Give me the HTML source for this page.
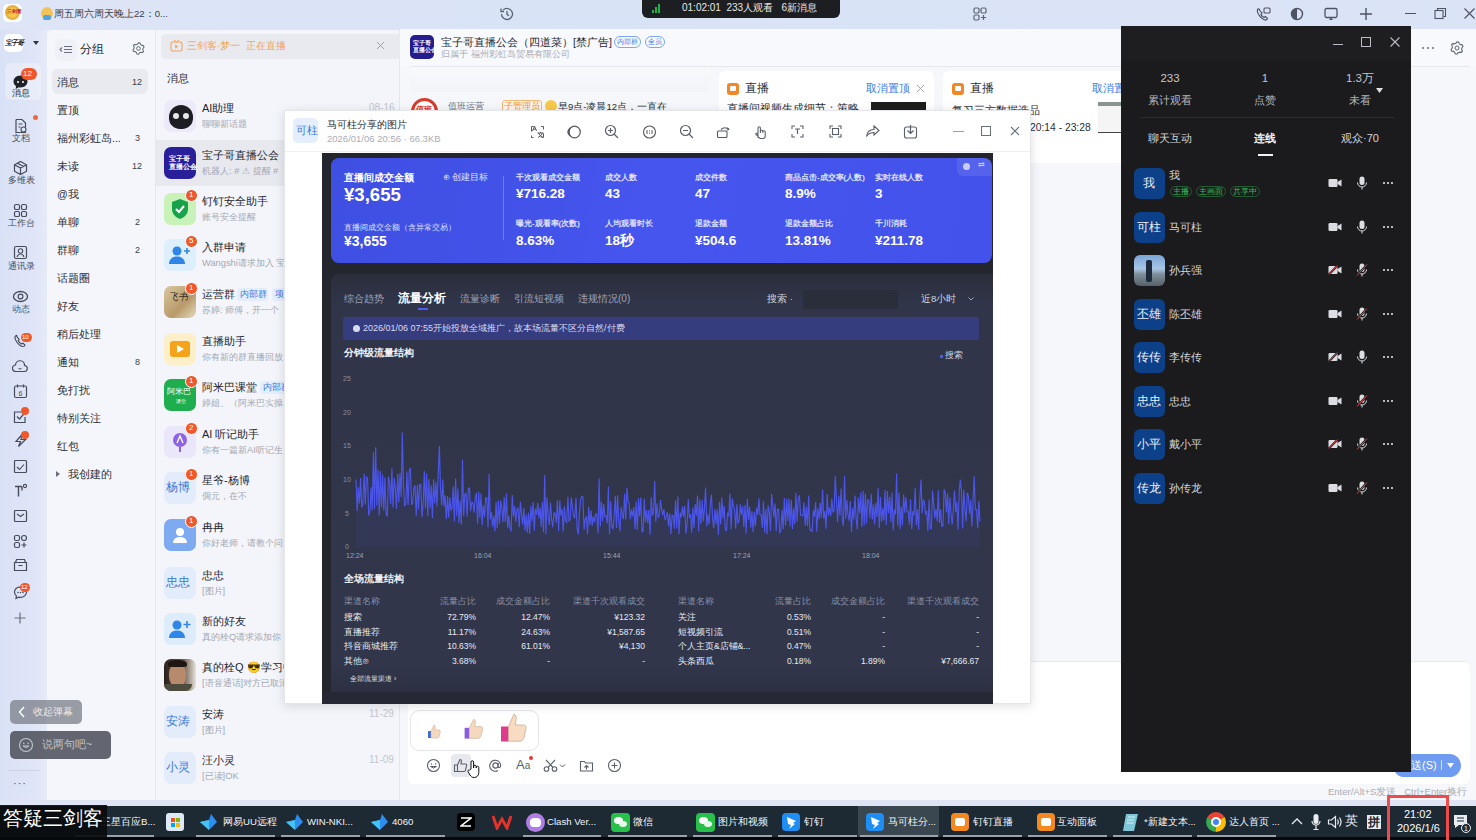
<!DOCTYPE html>
<html><head><meta charset="utf-8">
<style>
*{margin:0;padding:0;box-sizing:border-box}
html,body{width:1476px;height:840px;overflow:hidden;font-family:"Liberation Sans",sans-serif;background:#eef1f8;position:relative}
.a{position:absolute}
.t{position:absolute;white-space:nowrap;line-height:1}
</style></head><body>
<!-- title bar -->
<div class="a" style="left:0;top:0;width:1476px;height:30px;background:linear-gradient(90deg,#dde5f6 0%,#d9e3f6 40%,#dbe4f7 100%)"></div>
<div class="a" style="left:3px;top:4px;width:19px;height:18px;background:#fff;border-radius:5px"></div>
<div class="a" style="left:5px;top:5px;width:15px;height:15px;border-radius:50%;background:radial-gradient(circle,#f4c64a 0 40%,#e9a93a 60%,#f0d78a 100%)"></div>
<div class="t" style="left:7px;top:9px;font-size:5px;color:#c0262b;font-weight:bold">三剑客</div>
<div class="a" style="left:41px;top:7px;width:12px;height:13px;border-radius:50%;background:#f3c35b"></div>
<div class="a" style="left:43px;top:15px;width:8px;height:5px;background:#4ea3e0;border-radius:2px"></div>
<div class="t" style="left:54px;top:9px;font-size:9.6px;color:#383d4a">周五周六周天晚上22：0...</div>
<svg class="a" style="left:499px;top:6px" width="16" height="16" viewBox="0 0 16 16"><path d="M2.5 8a5.5 5.5 0 1 0 1.6-3.9" fill="none" stroke="#5c6270" stroke-width="1.3"/><path d="M2 2.5v3h3" fill="none" stroke="#5c6270" stroke-width="1.3"/><path d="M8 5v3.3l2 1.5" fill="none" stroke="#5c6270" stroke-width="1.3"/></svg>
<!-- live pill -->
<div class="a" style="left:642px;top:-6px;width:198px;height:24px;background:#1d1e22;border-radius:6px"></div>
<div class="a" style="left:652px;top:10px;width:2px;height:3px;background:#23b04b"></div>
<div class="a" style="left:655px;top:7px;width:2px;height:6px;background:#23b04b"></div>
<div class="a" style="left:658px;top:4px;width:2px;height:9px;background:#23b04b"></div>
<div class="t" style="left:682px;top:3px;font-size:10px;color:#e8e8e8">01:02:01&nbsp;&nbsp;233人观看&nbsp;&nbsp;&nbsp;6新消息</div>
<svg class="a" style="left:972px;top:6px" width="16" height="16" viewBox="0 0 16 16"><rect x="2" y="2" width="5" height="5" rx="1.2" fill="none" stroke="#5c6270" stroke-width="1.2"/><rect x="9" y="2" width="5" height="5" rx="1.2" fill="none" stroke="#5c6270" stroke-width="1.2"/><rect x="2" y="9" width="5" height="5" rx="1.2" fill="none" stroke="#5c6270" stroke-width="1.2"/><path d="M11.5 9v5M9 11.5h5" stroke="#5c6270" stroke-width="1.2"/></svg>
<!-- right title icons -->
<svg class="a" style="left:1255px;top:6px" width="17" height="16" viewBox="0 0 17 16"><path d="M3 3c-1 1-1 3 1 6s4 4.5 6 5c1 .2 2-.5 2.5-1.5l-2-2-1.5 1c-1-.5-2.5-2-3-3l1-1.5-2-2.2C4.3 3 3.6 2.6 3 3z" fill="none" stroke="#4d5362" stroke-width="1.2"/><rect x="9" y="2" width="6" height="5" rx="1" fill="none" stroke="#4d5362" stroke-width="1.1"/></svg>
<svg class="a" style="left:1289px;top:6px" width="16" height="16" viewBox="0 0 16 16"><circle cx="8" cy="8" r="5.5" fill="none" stroke="#4d5362" stroke-width="1.4"/><path d="M8 2.5a5.5 5.5 0 0 0 0 11z" fill="#4d5362"/></svg>
<svg class="a" style="left:1323px;top:6px" width="16" height="16" viewBox="0 0 16 16"><rect x="2" y="2.5" width="12" height="9" rx="1.5" fill="none" stroke="#4d5362" stroke-width="1.3"/><path d="M6 14h4l-2-2.5z" fill="#4d5362"/></svg>
<svg class="a" style="left:1358px;top:6px" width="16" height="16" viewBox="0 0 16 16"><path d="M8 2v12M2 8h12" stroke="#4d5362" stroke-width="1.4"/></svg>
<div class="a" style="left:1405px;top:13px;width:11px;height:1px;background:#4d5362"></div>
<svg class="a" style="left:1434px;top:7px" width="13" height="13" viewBox="0 0 13 13"><rect x="1" y="3.5" width="8" height="8" fill="none" stroke="#4d5362" stroke-width="1.1"/><path d="M3.5 3.5V1.5h8v8h-2" fill="none" stroke="#4d5362" stroke-width="1.1"/></svg>
<svg class="a" style="left:1463px;top:7px" width="13" height="13" viewBox="0 0 13 13"><path d="M1.5 1.5l10 10M11.5 1.5l-10 10" stroke="#4d5362" stroke-width="1.2"/></svg>

<!-- left rail -->
<div class="a" style="left:0;top:30px;width:47px;height:770px;background:linear-gradient(90deg,#d9e1f6 0%,#dfe5f7 70%,#e6eaf8 100%)"></div>
<div class="a" style="left:4px;top:34px;width:19px;height:18px;background:#fff;border-radius:5px"></div>
<div class="t" style="left:5px;top:39px;font-size:7px;color:#222;font-weight:bold;font-style:italic;letter-spacing:-1px">宝子哥</div>
<svg class="a" style="left:33px;top:41px" width="6" height="4" viewBox="0 0 6 4"><path d="M0 0h6L3 4z" fill="#333"/></svg>
<div class="a" style="left:5px;top:63px;width:36px;height:37px;background:rgba(255,255,255,.3);border-radius:6px"></div>
<svg class="a" style="left:12px;top:74px" width="17" height="17" viewBox="0 0 17 17"><path d="M8.5 1.5C4.4 1.5 1.5 4.3 1.5 7.6c0 1.9 1 3.6 2.6 4.7L3.6 15l3.2-1.8c.6.1 1.1.2 1.7.2 4.1 0 7-2.8 7-6s-2.9-6-7-6z" fill="#1f2229"/><circle cx="6" cy="8" r="1" fill="#fff"/><circle cx="11" cy="8" r="1" fill="#fff"/></svg>
<div class="a" style="left:21px;top:68px;width:16px;height:12px;background:#f0582a;border-radius:6px"></div>
<div class="t" style="left:23px;top:70px;font-size:8px;color:#fff">12</div>
<div class="t" style="left:12px;top:89px;font-size:9px;color:#2a2e38">消息</div>
<!-- 文档 -->
<svg class="a" style="left:13px;top:118px" width="15" height="16" viewBox="0 0 15 16"><path d="M3 1.5h6l3.5 3.5v4M12.5 13.5v1H3V1.5" fill="none" stroke="#474c5a" stroke-width="1.2"/><path d="M5.5 6h4M5.5 9h2" stroke="#474c5a" stroke-width="1.1"/><circle cx="10.5" cy="11.5" r="2.5" fill="none" stroke="#474c5a" stroke-width="1.1"/></svg>
<div class="a" style="left:33px;top:115px;width:5px;height:5px;border-radius:50%;background:#ee6a3b"></div>
<div class="t" style="left:12px;top:134px;font-size:9px;color:#4a4f5c">文档</div>
<!-- 多维表 -->
<svg class="a" style="left:12px;top:160px" width="17" height="16" viewBox="0 0 17 16"><path d="M8.5 1.5l6 3.3v6.4l-6 3.3-6-3.3V4.8z M2.5 4.8l6 3.3 6-3.3 M8.5 8.1v6.6 M5.5 3.2l6 3.3" fill="none" stroke="#474c5a" stroke-width="1.2"/></svg>
<div class="t" style="left:8px;top:176px;font-size:9px;color:#4a4f5c">多维表</div>
<!-- 工作台 -->
<svg class="a" style="left:13px;top:203px" width="15" height="15" viewBox="0 0 15 15"><rect x="1.5" y="1.5" width="5" height="5" rx="1.6" fill="none" stroke="#474c5a" stroke-width="1.2"/><rect x="8.5" y="1.5" width="5" height="5" rx="1.6" fill="none" stroke="#474c5a" stroke-width="1.2"/><rect x="1.5" y="8.5" width="5" height="5" rx="1.6" fill="none" stroke="#474c5a" stroke-width="1.2"/><rect x="8.5" y="8.5" width="5" height="5" rx="1.6" fill="none" stroke="#474c5a" stroke-width="1.2"/></svg>
<div class="t" style="left:8px;top:219px;font-size:9px;color:#4a4f5c">工作台</div>
<!-- 通讯录 -->
<svg class="a" style="left:13px;top:245px" width="15" height="15" viewBox="0 0 15 15"><rect x="1.5" y="1.5" width="12" height="12" rx="1.5" fill="none" stroke="#474c5a" stroke-width="1.2"/><circle cx="7.5" cy="6" r="2.2" fill="none" stroke="#474c5a" stroke-width="1.1"/><path d="M4 12c.5-2 2-3 3.5-3s3 1 3.5 3" fill="none" stroke="#474c5a" stroke-width="1.1"/></svg>
<div class="t" style="left:8px;top:262px;font-size:9px;color:#4a4f5c">通讯录</div>
<!-- 动态 -->
<svg class="a" style="left:12px;top:290px" width="17" height="13" viewBox="0 0 17 13"><ellipse cx="8.5" cy="6.5" rx="7" ry="5" fill="none" stroke="#474c5a" stroke-width="1.3"/><circle cx="8.5" cy="6.5" r="2.4" fill="none" stroke="#474c5a" stroke-width="1.2"/></svg>
<div class="t" style="left:12px;top:305px;font-size:9px;color:#4a4f5c">动态</div>
<!-- small icons -->
<svg class="a" style="left:13px;top:333px" width="15" height="15" viewBox="0 0 15 15"><path d="M3 2.5c-1.5 1-1.5 3 .5 6s4.5 5 6.5 5c1 0 1.8-.6 2-1.3l-2-2-1.5.8c-1-.6-2.6-2.2-3.2-3.2l.8-1.5-2-2.2C3.8 2.3 3.4 2.2 3 2.5z" fill="none" stroke="#474c5a" stroke-width="1.2"/></svg>
<div class="a" style="left:21px;top:333px;width:11px;height:9px;background:#f0582a;border-radius:5px"></div>
<div class="t" style="left:22px;top:334px;font-size:6px;color:#fff">10</div>
<svg class="a" style="left:12px;top:359px" width="16" height="14" viewBox="0 0 16 14"><path d="M4 12.5h8a3 3 0 0 0 .5-6A4.5 4.5 0 0 0 3.5 6 3.2 3.2 0 0 0 4 12.5z" fill="none" stroke="#474c5a" stroke-width="1.2"/><path d="M6.5 9.5q1.5 1 3 0" fill="none" stroke="#474c5a" stroke-width="1"/></svg>
<svg class="a" style="left:13px;top:383px" width="15" height="16" viewBox="0 0 15 16"><rect x="1.5" y="3" width="12" height="11.5" rx="1.5" fill="none" stroke="#474c5a" stroke-width="1.2"/><path d="M4.5 1.5v3M10.5 1.5v3" stroke="#474c5a" stroke-width="1.2"/><text x="7.5" y="12.5" font-size="7" text-anchor="middle" fill="#474c5a" font-family="Liberation Sans">6</text></svg>
<svg class="a" style="left:13px;top:409px" width="15" height="15" viewBox="0 0 15 15"><path d="M12 8v5.5H1.5V3H8" fill="none" stroke="#474c5a" stroke-width="1.2"/><path d="M4 7.5l2.5 2.5 6-7" fill="none" stroke="#474c5a" stroke-width="1.2"/></svg>
<div class="a" style="left:21px;top:407px;width:8px;height:8px;background:#f0582a;border-radius:50%"></div>
<svg class="a" style="left:13px;top:433px" width="15" height="15" viewBox="0 0 15 15"><path d="M9 1.5L3 8.5h4.5L5.5 13.5l7-7H8z" fill="none" stroke="#474c5a" stroke-width="1.2"/></svg>
<div class="a" style="left:21px;top:431px;width:8px;height:8px;background:#f0582a;border-radius:50%"></div>
<svg class="a" style="left:13px;top:459px" width="15" height="15" viewBox="0 0 15 15"><rect x="1.5" y="1.5" width="12" height="12" rx="1" fill="none" stroke="#474c5a" stroke-width="1.2"/><path d="M4 8l2.5 2.5 4.5-5" fill="none" stroke="#474c5a" stroke-width="1.1"/></svg>
<svg class="a" style="left:13px;top:483px" width="15" height="15" viewBox="0 0 15 15"><path d="M2 3.5h7M5.5 3.5v10M9 3.5v4" fill="none" stroke="#474c5a" stroke-width="1.4"/><circle cx="12" cy="3" r="1.6" fill="none" stroke="#474c5a" stroke-width="1.1"/></svg>
<svg class="a" style="left:13px;top:509px" width="15" height="14" viewBox="0 0 15 14"><rect x="1.5" y="1.5" width="12" height="11" rx="1" fill="none" stroke="#474c5a" stroke-width="1.2"/><path d="M4 5l3.5 2.5L11 5" fill="none" stroke="#474c5a" stroke-width="1.1"/></svg>
<svg class="a" style="left:13px;top:534px" width="15" height="15" viewBox="0 0 15 15"><rect x="1.5" y="1.5" width="5" height="5" rx="1.5" fill="none" stroke="#474c5a" stroke-width="1.2"/><circle cx="11" cy="4" r="2.5" fill="none" stroke="#474c5a" stroke-width="1.2"/><rect x="1.5" y="8.5" width="5" height="5" rx="1.5" fill="none" stroke="#474c5a" stroke-width="1.2"/><path d="M11 8.5v5M8.5 11h5" stroke="#474c5a" stroke-width="1.2"/></svg>
<svg class="a" style="left:13px;top:558px" width="15" height="14" viewBox="0 0 15 14"><path d="M1.5 4.5h12v8h-12z M2.5 4.5l1-3h8l1 3 M5.5 7.5h4" fill="none" stroke="#474c5a" stroke-width="1.2"/></svg>
<svg class="a" style="left:13px;top:585px" width="15" height="15" viewBox="0 0 15 15"><path d="M7.5 1.8c-3.3 0-6 2.3-6 5.3 0 1.5.7 2.9 1.9 3.9l-.4 2.5 2.6-1.4c.6.2 1.2.3 1.9.3 3.3 0 6-2.3 6-5.3S10.8 1.8 7.5 1.8z" fill="none" stroke="#474c5a" stroke-width="1.2"/><circle cx="5" cy="7.5" r=".8" fill="#474c5a"/><circle cx="7.5" cy="7.5" r=".8" fill="#474c5a"/><circle cx="10" cy="7.5" r=".8" fill="#474c5a"/></svg>
<div class="a" style="left:20px;top:583px;width:10px;height:9px;background:#f0582a;border-radius:5px"></div>
<div class="t" style="left:21px;top:584px;font-size:6px;color:#fff">12</div>
<svg class="a" style="left:13px;top:611px" width="14" height="14" viewBox="0 0 14 14"><path d="M7 1.5v11M1.5 7h11" stroke="#6a6f7c" stroke-width="1.2"/></svg>
<div class="a" style="left:8px;top:770px;width:32px;height:1px;background:#cfd4e4"></div>
<div class="t" style="left:13px;top:778px;font-size:11px;color:#474c5a;letter-spacing:1px">···</div>

<!-- group panel -->
<div class="a" style="left:47px;top:30px;width:108px;height:770px;background:#f5f6fb;border-radius:7px 0 0 0"></div>
<div class="a" style="left:55px;top:39px;width:22px;height:22px;border-radius:6px;background:#eff1f7"></div>
<svg class="a" style="left:59px;top:43px" width="14" height="13" viewBox="0 0 14 13"><path d="M5 3.5h8M5 6.5h8M5 9.5h8" stroke="#6b7080" stroke-width="1.1"/><path d="M3 4.5L1 6.5l2 2" fill="none" stroke="#6b7080" stroke-width="1.1"/></svg>
<div class="t" style="left:80px;top:44px;font-size:11.5px;color:#262a33">分组</div>
<svg class="a" style="left:132px;top:42px" width="13" height="13" viewBox="0 0 14 14"><path d="M7.00 0.80 L8.60 1.01 L9.40 2.84 L10.39 3.61 L12.37 3.90 L12.99 5.40 L11.80 7.00 L11.64 8.24 L12.37 10.10 L11.38 11.38 L9.40 11.16 L8.24 11.64 L7.00 13.20 L5.40 12.99 L4.60 11.16 L3.61 10.39 L1.63 10.10 L1.01 8.60 L2.20 7.00 L2.36 5.76 L1.63 3.90 L2.62 2.62 L4.60 2.84 L5.76 2.36z" fill="none" stroke="#5f6472" stroke-width="1.1" stroke-linejoin="round"/><circle cx="7" cy="7" r="2" fill="none" stroke="#5f6472" stroke-width="1"/></svg>
<div class="a" style="left:52px;top:69px;width:96px;height:25px;border-radius:6px;background:#e8eaf0"></div>
<div style="position:absolute;left:57px;top:1px;font-size:10.5px;color:#2a2e37">
<div class="t" style="left:0;top:76px">消息</div>
<div class="t" style="left:0;top:104px">置顶</div>
<div class="t" style="left:0;top:132px">福州彩虹岛...</div>
<div class="t" style="left:0;top:160px">未读</div>
<div class="t" style="left:0;top:188px">@我</div>
<div class="t" style="left:0;top:216px">单聊</div>
<div class="t" style="left:0;top:244px">群聊</div>
<div class="t" style="left:0;top:272px">话题圈</div>
<div class="t" style="left:0;top:300px">好友</div>
<div class="t" style="left:0;top:328px">稍后处理</div>
<div class="t" style="left:0;top:356px">通知</div>
<div class="t" style="left:0;top:384px">免打扰</div>
<div class="t" style="left:0;top:412px">特别关注</div>
<div class="t" style="left:0;top:440px">红包</div>
<div class="t" style="left:11px;top:468px">我创建的</div>
</div>
<svg class="a" style="left:56px;top:471px" width="5" height="6" viewBox="0 0 5 6"><path d="M0 0l4 3-4 3z" fill="#6b7080"/></svg>
<div style="position:absolute;left:1px;top:1px;font-size:9px;color:#3a3e48">
<div class="t" style="left:131px;top:77px">12</div>
<div class="t" style="left:134px;top:133px">3</div>
<div class="t" style="left:131px;top:161px">12</div>
<div class="t" style="left:134px;top:217px">2</div>
<div class="t" style="left:134px;top:245px">2</div>
<div class="t" style="left:134px;top:357px">8</div>
</div>

<!-- message list -->
<div class="a" style="left:155px;top:30px;width:245px;height:770px;background:#f4f5fa;border-left:1px solid #e4e6ee;border-right:1px solid #e4e6ee"></div>
<div class="a" style="left:161px;top:34px;width:239px;height:25px;background:#e9eaef;border-radius:5px 0 0 5px"></div>
<svg class="a" style="left:170px;top:39px" width="13" height="13" viewBox="0 0 13 13"><rect x="1" y="3" width="11" height="9" rx="1.5" fill="none" stroke="#f0a35a" stroke-width="1.1"/><path d="M4 1l2.5 2L9 1" fill="none" stroke="#f0a35a" stroke-width="1"/><path d="M5.2 5.5v4l3-2z" fill="#f0a35a"/></svg>
<div class="t" style="left:187px;top:41px;font-size:9.6px;color:#f0a35a">三剑客·梦一&nbsp; 正在直播</div>
<svg class="a" style="left:376px;top:41px" width="9" height="9" viewBox="0 0 9 9"><path d="M1 1l7 7M8 1L1 8" stroke="#9ca1ad" stroke-width="1"/></svg>
<div class="t" style="left:167px;top:73px;font-size:11px;color:#2a2e37">消息</div>
<!-- selected row bg -->
<div class="a" style="left:156px;top:140px;width:243px;height:46px;background:#e7e9ef"></div>
<div class="a" style="left:164px;top:100px;width:32px;height:32px;border-radius:7px;background:#eceaf8"></div>
<div class="a" style="left:169px;top:105px;width:24px;height:24px;border-radius:50% 50% 45% 45%;background:#1d1d24"></div>
<div class="a" style="left:173px;top:113px;width:6px;height:6px;border-radius:50%;background:#e8e8e8"></div><div class="a" style="left:183px;top:113px;width:6px;height:6px;border-radius:50%;background:#e8e8e8"></div>
<div class="t" style="left:202px;top:103px;font-size:11px;color:#23262e">AI助理</div>
<div class="t" style="left:202px;top:120px;font-size:9.3px;color:#a3a8b3">聊聊新话题</div>
<div class="t" style="left:369px;top:103px;font-size:10px;color:#c2c6ce">08-16</div>
<div class="a" style="left:164px;top:147px;width:32px;height:32px;border-radius:7px;background:#2a1f9a"></div>
<div class="t" style="left:169px;top:155px;font-size:7px;color:#fff;font-weight:bold;line-height:8px">宝子哥<br>直播公会</div>
<div class="t" style="left:202px;top:150px;font-size:11px;color:#23262e">宝子哥直播公会</div>
<div class="t" style="left:202px;top:167px;font-size:9.3px;color:#a3a8b3">机器人: # ⚠ 提醒 #</div>
<div class="a" style="left:164px;top:193px;width:32px;height:32px;border-radius:7px;background:#c9f2b8"></div>
<svg class="a" style="left:170px;top:198px" width="20" height="22" viewBox="0 0 20 22"><path d="M10 1l8 3v7c0 5-3.5 8.5-8 10-4.5-1.5-8-5-8-10V4z" fill="#18a34a"/><path d="M6 11l3 3 5-6" fill="none" stroke="#fff" stroke-width="2"/></svg>
<div class="a" style="left:185px;top:189px;width:13px;height:13px;border-radius:50%;background:#f0582a;border:1px solid #fff"></div>
<div class="t" style="left:189px;top:191px;font-size:8px;color:#fff">1</div>
<div class="t" style="left:202px;top:196px;font-size:11px;color:#23262e">钉钉安全助手</div>
<div class="t" style="left:202px;top:213px;font-size:9.3px;color:#a3a8b3">账号安全提醒</div>
<div class="a" style="left:164px;top:239px;width:32px;height:32px;border-radius:7px;background:#ddeefc"></div>
<svg class="a" style="left:168px;top:245px" width="24" height="20" viewBox="0 0 24 20"><circle cx="9" cy="6" r="4.5" fill="#2f86e8"/><path d="M1 19c0-5 3.5-7.5 8-7.5s8 2.5 8 7.5z" fill="#2f86e8"/><path d="M19 3v6M16 6h6" stroke="#2f86e8" stroke-width="1.6"/></svg>
<div class="a" style="left:185px;top:235px;width:13px;height:13px;border-radius:50%;background:#f0582a;border:1px solid #fff"></div>
<div class="t" style="left:189px;top:237px;font-size:8px;color:#fff">5</div>
<div class="t" style="left:202px;top:242px;font-size:11px;color:#23262e">入群申请</div>
<div class="t" style="left:202px;top:259px;font-size:9.3px;color:#a3a8b3">Wangshi请求加入 宝</div>
<div class="a" style="left:164px;top:286px;width:32px;height:32px;border-radius:7px;background:linear-gradient(135deg,#d9c7a0,#b89a6a 60%,#e8dcc0)"></div>
<div class="t" style="left:168px;top:292px;font-size:10px;color:#3a2a1a;font-style:italic">飞书</div>
<div class="a" style="left:185px;top:282px;width:13px;height:13px;border-radius:50%;background:#f0582a;border:1px solid #fff"></div>
<div class="t" style="left:189px;top:284px;font-size:8px;color:#fff">1</div>
<div class="t" style="left:202px;top:289px;font-size:11px;color:#23262e">运营群</div>
<div class="t" style="left:202px;top:306px;font-size:9.3px;color:#a3a8b3">苏婷: 师傅，开一个</div>
<div class="a" style="left:164px;top:333px;width:32px;height:32px;border-radius:7px;background:#fdf0c8"></div>
<div class="a" style="left:170px;top:341px;width:20px;height:16px;border-radius:3px;background:#f5a31a"></div>
<svg class="a" style="left:177px;top:345px" width="7" height="8" viewBox="0 0 7 8"><path d="M0 0l7 4-7 4z" fill="#fff"/></svg>
<div class="t" style="left:202px;top:336px;font-size:11px;color:#23262e">直播助手</div>
<div class="t" style="left:202px;top:353px;font-size:9.3px;color:#a3a8b3">你有新的群直播回放</div>
<div class="a" style="left:164px;top:379px;width:32px;height:32px;border-radius:7px;background:#1fae4e"></div>
<div class="t" style="left:167px;top:388px;font-size:8px;color:#fff">阿米巴</div><div class="t" style="left:176px;top:399px;font-size:5px;color:#fff">课堂</div>
<div class="a" style="left:185px;top:375px;width:13px;height:13px;border-radius:50%;background:#f0582a;border:1px solid #fff"></div>
<div class="t" style="left:189px;top:377px;font-size:8px;color:#fff">1</div>
<div class="t" style="left:202px;top:382px;font-size:11px;color:#23262e">阿米巴课堂</div>
<div class="t" style="left:202px;top:399px;font-size:9.3px;color:#a3a8b3">婷姐、（阿米巴实操</div>
<div class="a" style="left:164px;top:426px;width:32px;height:32px;border-radius:7px;background:#ebe7fa"></div>
<svg class="a" style="left:170px;top:431px" width="20" height="22" viewBox="0 0 20 22"><circle cx="10" cy="9" r="7" fill="#8d63e6"/><path d="M10 16v5" stroke="#8d63e6" stroke-width="2"/><path d="M7 12l3-7 3 7" fill="none" stroke="#fff" stroke-width="1.4"/></svg>
<div class="a" style="left:185px;top:422px;width:13px;height:13px;border-radius:50%;background:#f0582a;border:1px solid #fff"></div>
<div class="t" style="left:189px;top:424px;font-size:8px;color:#fff">2</div>
<div class="t" style="left:202px;top:429px;font-size:11px;color:#23262e">AI 听记助手</div>
<div class="t" style="left:202px;top:446px;font-size:9.3px;color:#a3a8b3">你有一篇新AI听记生</div>
<div class="a" style="left:164px;top:472px;width:32px;height:32px;border-radius:7px;background:#e3ecfb"></div>
<div class="t" style="left:166px;top:482px;font-size:11.5px;color:#3a78d8">杨博</div>
<div class="a" style="left:185px;top:468px;width:13px;height:13px;border-radius:50%;background:#f0582a;border:1px solid #fff"></div>
<div class="t" style="left:189px;top:470px;font-size:8px;color:#fff">1</div>
<div class="t" style="left:202px;top:475px;font-size:11px;color:#23262e">星爷-杨博</div>
<div class="t" style="left:202px;top:492px;font-size:9.3px;color:#a3a8b3">倜元，在不</div>
<div class="a" style="left:164px;top:519px;width:32px;height:32px;border-radius:7px;background:#7eaaf2"></div>
<svg class="a" style="left:170px;top:525px" width="20" height="20" viewBox="0 0 20 20"><circle cx="10" cy="7" r="4" fill="#fff"/><path d="M3 18c0-4 3-6 7-6s7 2 7 6z" fill="#fff"/></svg>
<div class="a" style="left:185px;top:515px;width:13px;height:13px;border-radius:50%;background:#f0582a;border:1px solid #fff"></div>
<div class="t" style="left:189px;top:517px;font-size:8px;color:#fff">1</div>
<div class="t" style="left:202px;top:522px;font-size:11px;color:#23262e">冉冉</div>
<div class="t" style="left:202px;top:539px;font-size:9.3px;color:#a3a8b3">你好老师，请教个问</div>
<div class="a" style="left:164px;top:567px;width:32px;height:32px;border-radius:7px;background:#e3ecfb"></div>
<div class="t" style="left:166px;top:577px;font-size:11.5px;color:#3a78d8">忠忠</div>
<div class="t" style="left:202px;top:570px;font-size:11px;color:#23262e">忠忠</div>
<div class="t" style="left:202px;top:587px;font-size:9.3px;color:#a3a8b3">[图片]</div>
<div class="a" style="left:164px;top:613px;width:32px;height:32px;border-radius:7px;background:#dcecfb"></div>
<svg class="a" style="left:168px;top:619px" width="24" height="20" viewBox="0 0 24 20"><circle cx="9" cy="6" r="4.5" fill="#2f86e8"/><path d="M1 19c0-5 3.5-7.5 8-7.5s8 2.5 8 7.5z" fill="#2f86e8"/><path d="M19 2v7M15.5 5.5h7" stroke="#2f86e8" stroke-width="1.6"/></svg>
<div class="t" style="left:202px;top:616px;font-size:11px;color:#23262e">新的好友</div>
<div class="t" style="left:202px;top:633px;font-size:9.3px;color:#a3a8b3">真的栓Q请求添加你</div>
<div class="a" style="left:164px;top:659px;width:32px;height:32px;border-radius:7px;background:linear-gradient(90deg,#2a201c,#6b5a4a 60%,#e8e2da);overflow:hidden"></div><div class="a" style="left:169px;top:663px;width:17px;height:24px;border-radius:45%;background:#b88a6c"></div><div class="a" style="left:168px;top:660px;width:19px;height:7px;border-radius:50% 50% 20% 20%;background:#1e1612"></div><div class="a" style="left:164px;top:684px;width:28px;height:7px;border-radius:0 0 7px 7px;background:#4d4a3e"></div>
<div class="t" style="left:202px;top:662px;font-size:11px;color:#23262e">真的栓Q 😎学习中</div>
<div class="t" style="left:202px;top:679px;font-size:9.3px;color:#a3a8b3">[语音通话]对方已取消</div>
<div class="a" style="left:164px;top:706px;width:32px;height:32px;border-radius:7px;background:#e3ecfb"></div>
<div class="t" style="left:166px;top:716px;font-size:11.5px;color:#3a78d8">安涛</div>
<div class="t" style="left:202px;top:709px;font-size:11px;color:#23262e">安涛</div>
<div class="t" style="left:202px;top:726px;font-size:9.3px;color:#a3a8b3">[图片]</div>
<div class="t" style="left:369px;top:709px;font-size:10px;color:#c2c6ce">11-29</div>
<div class="a" style="left:164px;top:752px;width:32px;height:32px;border-radius:7px;background:#e3ecfb"></div>
<div class="t" style="left:166px;top:762px;font-size:11.5px;color:#3a78d8">小灵</div>
<div class="t" style="left:202px;top:755px;font-size:11px;color:#23262e">汪小灵</div>
<div class="t" style="left:202px;top:772px;font-size:9.3px;color:#a3a8b3">[已读]OK</div>
<div class="t" style="left:369px;top:755px;font-size:10px;color:#c2c6ce">11-09</div>

<div class="a" style="left:237px;top:288px;width:31px;height:13px;border-radius:3px;background:#e4edfc"></div><div class="t" style="left:240px;top:290px;font-size:8.5px;color:#3a7ae0">内部群</div>
<div class="a" style="left:272px;top:288px;width:20px;height:13px;border-radius:3px;background:#e4edfc"></div><div class="t" style="left:275px;top:290px;font-size:8.5px;color:#3a7ae0">项目</div>
<div class="a" style="left:260px;top:381px;width:31px;height:13px;border-radius:3px;background:#e4edfc"></div><div class="t" style="left:263px;top:383px;font-size:8.5px;color:#3a7ae0">内部群</div>
<!-- chat -->
<div class="a" style="left:400px;top:29px;width:1076px;height:771px;background:#f6f7fa;border-radius:0"></div>
<div class="a" style="left:400px;top:29px;width:1076px;height:37px;background:#f8f9fc"></div>
<div class="a" style="left:410px;top:66px;width:1060px;height:1px;background:#e6e8ee"></div>
<div class="a" style="left:410px;top:35px;width:24px;height:24px;border-radius:5px;background:#251c8e"></div>
<div class="t" style="left:413px;top:40px;font-size:6px;line-height:7px;color:#fff;font-weight:bold">宝子哥<br>直播公会</div>
<div class="t" style="left:441px;top:37px;font-size:10.6px;color:#262a33">宝子哥直播公会（四道菜）[禁广告]</div>
<div class="a" style="left:614px;top:36px;width:27px;height:12px;border:1px solid #7aa7f0;border-radius:6px"></div>
<div class="t" style="left:617px;top:38px;font-size:7.3px;color:#3a7ae0">内部群</div>
<div class="a" style="left:645px;top:36px;width:20px;height:12px;border:1px solid #7aa7f0;border-radius:6px"></div>
<div class="t" style="left:648px;top:38px;font-size:7.3px;color:#3a7ae0">全员</div>
<div class="t" style="left:441px;top:50px;font-size:9.3px;color:#a9adb8">归属于 福州彩虹岛贸易有限公司</div>
<svg class="a" style="left:1421px;top:46px" width="14" height="4" viewBox="0 0 14 4"><circle cx="2" cy="2" r="1" fill="#6a6f7c"/><circle cx="7" cy="2" r="1" fill="#6a6f7c"/><circle cx="12" cy="2" r="1" fill="#6a6f7c"/></svg>
<svg class="a" style="left:1450px;top:41px" width="14" height="14" viewBox="0 0 14 14"><path d="M7.00 0.80 L8.60 1.01 L9.40 2.84 L10.39 3.61 L12.37 3.90 L12.99 5.40 L11.80 7.00 L11.64 8.24 L12.37 10.10 L11.38 11.38 L9.40 11.16 L8.24 11.64 L7.00 13.20 L5.40 12.99 L4.60 11.16 L3.61 10.39 L1.63 10.10 L1.01 8.60 L2.20 7.00 L2.36 5.76 L1.63 3.90 L2.62 2.62 L4.60 2.84 L5.76 2.36z" fill="none" stroke="#5f6472" stroke-width="1.1" stroke-linejoin="round"/><circle cx="7" cy="7" r="2" fill="none" stroke="#5f6472" stroke-width="1"/></svg>
<div class="a" style="left:1410px;top:66px;width:60px;height:1px;background:#e6e8ee"></div>
<!-- pinned strip -->
<div class="a" style="left:410px;top:68px;width:300px;height:24px;background:linear-gradient(180deg,#f8f9fb,#f3f4f8)"></div>
<div class="a" style="left:719px;top:71px;width:215px;height:92px;background:#fff;border-radius:6px"></div>
<div class="a" style="left:943px;top:71px;width:190px;height:92px;background:#fff;border-radius:6px"></div>
<div class="a" style="left:727px;top:83px;width:12px;height:12px;border-radius:3px;background:#f0882a"></div>
<div class="a" style="left:730px;top:86px;width:6px;height:5px;border-radius:1px;background:#fff"></div>
<div class="t" style="left:745px;top:83px;font-size:11.5px;color:#2a2e37">直播</div>
<div class="t" style="left:866px;top:83px;font-size:11px;color:#3a7ae0">取消置顶</div>
<svg class="a" style="left:916px;top:84px" width="9" height="9" viewBox="0 0 9 9"><path d="M1 1l7 7M8 1L1 8" stroke="#9ca1ad" stroke-width="1"/></svg>
<div class="t" style="left:727px;top:103px;font-size:11px;color:#2a2e37">直播间视频生成细节：策略</div>
<div class="a" style="left:871px;top:102px;width:55px;height:10px;background:#1e1e1e"></div>
<div class="a" style="left:952px;top:83px;width:12px;height:12px;border-radius:3px;background:#f0882a"></div>
<div class="a" style="left:955px;top:86px;width:6px;height:5px;border-radius:1px;background:#fff"></div>
<div class="t" style="left:970px;top:83px;font-size:11.5px;color:#2a2e37">直播</div>
<div class="t" style="left:1092px;top:83px;font-size:11px;color:#3a7ae0">取消置顶</div>
<div class="t" style="left:952px;top:105px;font-size:11px;color:#2a2e37">复习三方数据选品</div>
<div class="t" style="left:1030px;top:123px;font-size:10.3px;color:#2a2e37">20:14 - 23:28</div>
<div class="a" style="left:1098px;top:102px;width:23px;height:31px;background:linear-gradient(180deg,#8a948e 0 12%,#f4f5f4 12%);border-bottom:1px solid #444"></div>
<div class="a" style="left:719px;top:93px;width:0;height:0"></div>
<!-- first msg -->
<div class="a" style="left:411px;top:98px;width:27px;height:27px;border-radius:50%;background:#fff;border:3px solid #d93a2b"></div><div class="t" style="left:416px;top:106px;font-size:8px;color:#d93a2b;font-weight:bold">值班</div>
<div class="t" style="left:448px;top:102px;font-size:9.3px;color:#6b707c">值班运营</div>
<div class="a" style="left:502px;top:100px;width:40px;height:13px;border:1px solid #f2b774;border-radius:3px;background:#fff5e8"></div>
<div class="t" style="left:504px;top:102px;font-size:8.8px;color:#f0953a">子管理员</div>
<div class="a" style="left:545px;top:100px;width:12px;height:12px;border-radius:50%;background:#f7c94a"></div>
<div class="t" style="left:558px;top:102px;font-size:9.5px;color:#2a2e37">早9点-凌晨12点，一直在</div>
<!-- right side under viewer items (faint) -->

<!-- input area -->

<div class="a" style="left:408px;top:661px;width:1062px;height:123px;background:#fff;border-radius:6px;border-top:1px solid #e6e8ed"></div>
<div class="a" style="left:410px;top:710px;width:129px;height:41px;background:#fff;border:1px solid #e3e5ea;border-radius:9px"></div>
<svg class="a" style="left:424px;top:721px" width="20" height="20" viewBox="0 0 20 20"><path d="M4 10h3v7H4z" fill="#3b6fd4"/><path d="M7 10l3-6c1 0 1.5 1 1.2 2.5L11 9h4c1 0 1.5.8 1.3 1.7l-1 4.5c-.3 1-1 1.8-2 1.8H7z" fill="#f5d9bf" stroke="#c9a78a" stroke-width=".5"/></svg>
<svg class="a" style="left:461px;top:717px" width="24" height="24" viewBox="0 0 20 20"><path d="M3 9h4v9H3z" fill="#8a5ed8"/><path d="M7 9l3.5-7c1.2 0 1.8 1.2 1.4 3L11.5 8h5c1.2 0 1.8 1 1.5 2l-1.2 5.5c-.3 1.3-1.2 2.3-2.4 2.3H7z" fill="#f5d9bf" stroke="#c9a78a" stroke-width=".5"/></svg>
<svg class="a" style="left:498px;top:713px" width="30" height="30" viewBox="0 0 20 20"><path d="M2 9h5v10H2z" fill="#e03c8e"/><path d="M7 9l3.5-8c1.3 0 2 1.3 1.6 3.3L11.5 8h5.5c1.3 0 2 1 1.7 2.2l-1.3 6c-.4 1.5-1.4 2.6-2.7 2.6H7z" fill="#f7dcc3" stroke="#c9a78a" stroke-width=".5"/></svg>
<!-- toolbar icons -->
<svg class="a" style="left:426px;top:758px" width="15" height="15" viewBox="0 0 15 15"><circle cx="7.5" cy="7.5" r="6" fill="none" stroke="#5a5f6c" stroke-width="1.1"/><path d="M4.5 8.5q3 3 6 0z" fill="none" stroke="#5a5f6c" stroke-width="1"/><circle cx="5.5" cy="6" r=".7" fill="#5a5f6c"/><circle cx="9.5" cy="6" r=".7" fill="#5a5f6c"/></svg>
<div class="a" style="left:451px;top:754px;width:20px;height:23px;border-radius:4px;background:#e8e9ee"></div>
<svg class="a" style="left:453px;top:758px" width="15" height="15" viewBox="0 0 15 15"><path d="M1.5 7h3v6.5h-3z M4.5 7l2.5-5.5c1 0 1.6.8 1.3 2L8 6h4.5c.8 0 1.3.7 1.1 1.4l-1.1 4.8c-.2.8-.8 1.3-1.5 1.3H4.5" fill="none" stroke="#5a5f6c" stroke-width="1.1"/></svg>
<svg class="a" style="left:467px;top:759px" width="14" height="20" viewBox="0 0 14 20"><path d="M4 10V3a1.3 1.3 0 0 1 2.6 0v6V7.5a1.3 1.3 0 0 1 2.6 0V9 8.5a1.3 1.3 0 0 1 2.6 0v5c0 3-2 5-4.5 5H7c-2 0-3-1-4-2.5L1 12.5c-.5-.8.5-1.8 1.3-1.2z" fill="#fff" stroke="#111" stroke-width="1"/></svg>
<svg class="a" style="left:488px;top:758px" width="15" height="15" viewBox="0 0 15 15"><circle cx="7.5" cy="7.5" r="2.6" fill="none" stroke="#5a5f6c" stroke-width="1.1"/><path d="M10.1 5v3.5c0 1.5 2.6 1.5 2.6-1A5.5 5.5 0 1 0 10 12.5" fill="none" stroke="#5a5f6c" stroke-width="1.1"/></svg>
<div class="t" style="left:516px;top:758px;font-size:13px;color:#5a5f6c">A<span style="font-size:10px">a</span></div>
<div class="a" style="left:529px;top:756px;width:4px;height:4px;border-radius:50%;background:#e53935"></div>
<svg class="a" style="left:543px;top:758px" width="24" height="15" viewBox="0 0 24 15"><circle cx="3.5" cy="11" r="2.3" fill="none" stroke="#5a5f6c" stroke-width="1.1"/><circle cx="11.5" cy="11" r="2.3" fill="none" stroke="#5a5f6c" stroke-width="1.1"/><path d="M5 9.5L12 2M10 9.5L3 2" stroke="#5a5f6c" stroke-width="1.1"/><path d="M17 6.5l2.5 2.5 2.5-2.5" fill="none" stroke="#5a5f6c" stroke-width="1"/></svg>
<svg class="a" style="left:579px;top:758px" width="15" height="15" viewBox="0 0 15 15"><path d="M1.5 3.5h4l1 1.5h7v8h-12z" fill="none" stroke="#5a5f6c" stroke-width="1.1"/><path d="M7.5 11.5v-4M5.5 9.5l2-2 2 2" fill="none" stroke="#5a5f6c" stroke-width="1.1"/></svg>
<svg class="a" style="left:607px;top:758px" width="15" height="15" viewBox="0 0 15 15"><circle cx="7.5" cy="7.5" r="6" fill="none" stroke="#5a5f6c" stroke-width="1.1"/><path d="M7.5 4.5v6M4.5 7.5h6" stroke="#5a5f6c" stroke-width="1.1"/></svg>
<div class="a" style="left:1393px;top:754px;width:68px;height:23px;border-radius:12px;background:#6f9cf1"></div>
<div class="t" style="left:1411px;top:760px;font-size:11px;color:#fff">送(S)</div>
<div class="a" style="left:1441px;top:760px;width:1px;height:10px;background:#cfe0ff"></div>
<svg class="a" style="left:1447px;top:763px" width="7" height="5" viewBox="0 0 7 5"><path d="M0 0h7L3.5 5z" fill="#fff"/></svg>
<div class="t" style="left:1328px;top:787px;font-size:9.5px;color:#a9adb6">Enter/Alt+S发送&nbsp;&nbsp;&nbsp;Ctrl+Enter换行</div>
<!-- left overlays -->
<div class="a" style="left:10px;top:700px;width:72px;height:24px;border-radius:5px;background:rgba(120,125,135,.75)"></div>
<svg class="a" style="left:18px;top:706px" width="8" height="12" viewBox="0 0 8 12"><path d="M6 1L1.5 6 6 11" fill="none" stroke="#fff" stroke-width="1.4"/></svg>
<div class="t" style="left:33px;top:707px;font-size:10px;color:#e8eaee">收起弹幕</div>
<div class="a" style="left:10px;top:731px;width:101px;height:28px;border-radius:5px;background:rgba(78,82,92,.88)"></div>
<svg class="a" style="left:18px;top:737px" width="16" height="16" viewBox="0 0 16 16"><circle cx="8" cy="8" r="6.5" fill="none" stroke="#c4c7ce" stroke-width="1.1"/><path d="M5 9q3 3 6 0z" fill="none" stroke="#c4c7ce" stroke-width="1"/><circle cx="5.8" cy="6.3" r=".8" fill="#c4c7ce"/><circle cx="10.2" cy="6.3" r=".8" fill="#c4c7ce"/></svg>
<div class="t" style="left:42px;top:739px;font-size:10.5px;color:#bfc2c9">说两句吧~</div>

<!-- image viewer -->
<div class="a" style="left:284px;top:110px;width:747px;height:594px;background:#fff;box-shadow:0 2px 10px rgba(0,0,0,.13);border:1px solid #e4e6eb"></div>
<div class="a" style="left:293px;top:118px;width:25px;height:25px;border-radius:5px;background:#e5eefc"></div>
<div class="t" style="left:296px;top:125px;font-size:10.5px;color:#3a7ae0">可柱</div>
<div class="t" style="left:327px;top:120px;font-size:10.3px;color:#262a33">马可柱分享的图片</div>
<div class="t" style="left:327px;top:134px;font-size:9.5px;color:#a9adb8">2026/01/06 20:56 · 66.3KB</div>
<div class="a" style="left:285px;top:151px;width:745px;height:1px;background:#eef0f3"></div>
<svg class="a" style="left:530px;top:124px" width="15" height="16" viewBox="0 0 15 16"><path d="M1.5 7.5V2.5h2M11 2.5h2.5v3M13.5 9.5v4h-2M3.5 13.5h-2v-2" fill="none" stroke="#55595f" stroke-width="1"/><path d="M2.5 7l2-5 2 5M3.3 5.2h2.4" fill="none" stroke="#55595f" stroke-width="1"/><path d="M7.5 9h6M10.5 8v1M8.5 9q1 3 4.5 4.5M12.5 9q-1 3-4.5 4.5" fill="none" stroke="#55595f" stroke-width="1"/></svg>
<svg class="a" style="left:567px;top:124px" width="15" height="16" viewBox="0 0 15 16"><circle cx="7.5" cy="8" r="5.8" fill="none" stroke="#55595f" stroke-width="1.2"/><path d="M5 3.3a5.8 5.8 0 0 0 0 9.4 4.2 4.2 0 0 1 0-9.4z" fill="#55595f"/></svg>
<svg class="a" style="left:604px;top:124px" width="15" height="16" viewBox="0 0 15 16"><circle cx="6.5" cy="6.5" r="5" fill="none" stroke="#5a5f6c" stroke-width="1.2"/><path d="M10 10l4 4M4 6.5h5M6.5 4v5" stroke="#5a5f6c" stroke-width="1.2"/></svg>
<svg class="a" style="left:642px;top:124px" width="15" height="16" viewBox="0 0 15 16"><circle cx="7.5" cy="8" r="6" fill="none" stroke="#55595f" stroke-width="1.1"/><path d="M5 6v4M10 6v4" stroke="#55595f" stroke-width="1"/><circle cx="7.5" cy="6.8" r=".6" fill="#55595f"/><circle cx="7.5" cy="9.2" r=".6" fill="#55595f"/></svg>
<svg class="a" style="left:679px;top:124px" width="15" height="16" viewBox="0 0 15 16"><circle cx="6.5" cy="6.5" r="5" fill="none" stroke="#5a5f6c" stroke-width="1.2"/><path d="M10 10l4 4M4 6.5h5" stroke="#5a5f6c" stroke-width="1.2"/></svg>
<svg class="a" style="left:716px;top:124px" width="15" height="16" viewBox="0 0 15 16"><rect x="1.5" y="7" width="9.5" height="6.5" rx="1" fill="none" stroke="#55595f" stroke-width="1.1"/><path d="M5 5.5q3.5-3.5 8 0" fill="none" stroke="#55595f" stroke-width="1.1"/><path d="M11.5 3.5l1.5 2-2.3.6" fill="none" stroke="#55595f" stroke-width="1"/></svg>
<svg class="a" style="left:753px;top:124px" width="15" height="16" viewBox="0 0 15 16"><path d="M5 14V4a1.2 1.2 0 0 1 2.4 0v5-1.5a1.2 1.2 0 0 1 2.4 0V9v-1a1.2 1.2 0 0 1 2.4 0V12c0 1.5-1 2.5-2 2.5H7L3 10.5c-.5-.6 0-1.5.9-1.2L5 10" fill="none" stroke="#5a5f6c" stroke-width="1.1"/></svg>
<svg class="a" style="left:790px;top:124px" width="15" height="16" viewBox="0 0 15 16"><path d="M2 5V2h3M10 2h3v3M13 10v3h-3M5 13H2v-3" fill="none" stroke="#5a5f6c" stroke-width="1.1"/><path d="M5 5h5M7.5 5v5" stroke="#5a5f6c" stroke-width="1.2"/></svg>
<svg class="a" style="left:828px;top:124px" width="15" height="16" viewBox="0 0 15 16"><path d="M2 5V2h3M10 2h3v3M13 10v3h-3M5 13H2v-3" fill="none" stroke="#5a5f6c" stroke-width="1.1"/><rect x="4.5" y="4.5" width="6" height="6" fill="none" stroke="#5a5f6c" stroke-width="1.1"/></svg>
<svg class="a" style="left:865px;top:124px" width="15" height="16" viewBox="0 0 15 16"><path d="M9 2l5 4.5-5 4.5V8.5c-4 0-6 1.5-7.5 4 .5-4 3-7 7.5-7z" fill="none" stroke="#5a5f6c" stroke-width="1.1"/></svg>
<svg class="a" style="left:903px;top:124px" width="15" height="16" viewBox="0 0 15 16"><rect x="1.5" y="3" width="12" height="11" rx="2" fill="none" stroke="#5a5f6c" stroke-width="1.1"/><path d="M7.5 1v8M4.5 6.5l3 3 3-3" fill="none" stroke="#5a5f6c" stroke-width="1.2"/></svg>
<div class="a" style="left:953px;top:131px;width:11px;height:1px;background:#9a9fab"></div>
<div class="a" style="left:981px;top:126px;width:10px;height:10px;border:1px solid #6a6f7c"></div>
<svg class="a" style="left:1010px;top:126px" width="10" height="10" viewBox="0 0 10 10"><path d="M1 1l8 8M9 1L1 9" stroke="#6a6f7c" stroke-width="1.1"/></svg>
<div class="a" style="left:322px;top:153px;width:671px;height:551px;background:#24262e"></div>
<div class="a" style="left:331px;top:274px;width:662px;height:418px;background:linear-gradient(180deg,#2b2e3b 0,#30354a 30px,#31364b 390px,#2c3042 100%);border-radius:8px 0 0 0"></div><div class="a" style="left:322px;top:692px;width:671px;height:12px;background:#262835"></div>
<div class="a" style="left:331px;top:158px;width:661px;height:105px;border-radius:8px;background:linear-gradient(100deg,#3f4fe2 0%,#4555ee 50%,#4252ea 100%)"></div>
<div class="a" style="left:957px;top:158px;width:35px;height:18px;border-radius:0 8px 0 6px;background:rgba(255,255,255,.1)"></div>
<div class="a" style="left:963px;top:163px;width:7px;height:7px;border-radius:50%;background:#c7cdf7"></div>
<div class="t" style="left:978px;top:161px;font-size:8px;color:#c7cdf7">⇄</div>
<div class="t" style="left:344px;top:173px;font-size:10.4px;font-weight:bold;color:#ffffff">直播间成交金额</div>
<div class="t" style="left:344px;top:186px;font-size:18.6px;font-weight:bold;color:#ffffff">¥3,655</div>
<div class="t" style="left:443px;top:173px;font-size:8.5px;color:#dfe3fb">⊕ 创建目标</div>
<div class="t" style="left:344px;top:224px;font-size:7.6px;color:#dfe3fb">直播间成交金额（含异常交易）</div>
<div class="t" style="left:344px;top:234px;font-size:14px;font-weight:bold;color:#ffffff">¥3,655</div>
<div class="a" style="left:503px;top:176px;width:1px;height:64px;background:rgba(255,255,255,.25)"></div>
<div class="t" style="left:516px;top:174px;font-size:7.8px;color:#dfe3fb;font-weight:bold">千次观看成交金额</div>
<div class="t" style="left:516px;top:187px;font-size:13.5px;font-weight:bold;color:#ffffff">¥716.28</div>
<div class="t" style="left:516px;top:220px;font-size:7.8px;color:#dfe3fb;font-weight:bold">曝光-观看率(次数)</div>
<div class="t" style="left:516px;top:234px;font-size:13.5px;font-weight:bold;color:#ffffff">8.63%</div>
<div class="t" style="left:605px;top:174px;font-size:7.8px;color:#dfe3fb;font-weight:bold">成交人数</div>
<div class="t" style="left:605px;top:187px;font-size:13.5px;font-weight:bold;color:#ffffff">43</div>
<div class="t" style="left:605px;top:220px;font-size:7.8px;color:#dfe3fb;font-weight:bold">人均观看时长</div>
<div class="t" style="left:605px;top:234px;font-size:13.5px;font-weight:bold;color:#ffffff">18秒</div>
<div class="t" style="left:695px;top:174px;font-size:7.8px;color:#dfe3fb;font-weight:bold">成交件数</div>
<div class="t" style="left:695px;top:187px;font-size:13.5px;font-weight:bold;color:#ffffff">47</div>
<div class="t" style="left:695px;top:220px;font-size:7.8px;color:#dfe3fb;font-weight:bold">退款金额</div>
<div class="t" style="left:695px;top:234px;font-size:13.5px;font-weight:bold;color:#ffffff">¥504.6</div>
<div class="t" style="left:785px;top:174px;font-size:7.8px;color:#dfe3fb;font-weight:bold">商品点击-成交率(人数)</div>
<div class="t" style="left:785px;top:187px;font-size:13.5px;font-weight:bold;color:#ffffff">8.9%</div>
<div class="t" style="left:785px;top:220px;font-size:7.8px;color:#dfe3fb;font-weight:bold">退款金额占比</div>
<div class="t" style="left:785px;top:234px;font-size:13.5px;font-weight:bold;color:#ffffff">13.81%</div>
<div class="t" style="left:875px;top:174px;font-size:7.8px;color:#dfe3fb;font-weight:bold">实时在线人数</div>
<div class="t" style="left:875px;top:187px;font-size:13.5px;font-weight:bold;color:#ffffff">3</div>
<div class="t" style="left:875px;top:220px;font-size:7.8px;color:#dfe3fb;font-weight:bold">千川消耗</div>
<div class="t" style="left:875px;top:234px;font-size:13.5px;font-weight:bold;color:#ffffff">¥211.78</div>
<div class="t" style="left:344px;top:294px;font-size:10px;color:#9ea3b5">综合趋势</div>
<div class="t" style="left:460px;top:294px;font-size:10px;color:#9ea3b5">流量诊断</div>
<div class="t" style="left:514px;top:294px;font-size:10px;color:#9ea3b5">引流短视频</div>
<div class="t" style="left:578px;top:294px;font-size:10px;color:#9ea3b5">违规情况(0)</div>
<div class="t" style="left:398px;top:292px;font-size:12px;font-weight:bold;color:#fff">流量分析</div>
<div class="a" style="left:418px;top:308px;width:10px;height:2px;background:#4e5cf0"></div>
<div class="t" style="left:767px;top:294px;font-size:9.5px;color:#d0d3de">搜索 ·</div>
<div class="a" style="left:803px;top:290px;width:95px;height:19px;background:#2a2d3a;border-radius:3px"></div>
<div class="t" style="left:921px;top:294px;font-size:9.5px;color:#d0d3de">近8小时</div>
<svg class="a" style="left:968px;top:297px" width="6" height="4" viewBox="0 0 6 4"><path d="M.5.5L3 3 5.5.5" fill="none" stroke="#b0b4c2" stroke-width=".9"/></svg>
<div class="a" style="left:343px;top:317px;width:636px;height:23px;background:#363d7e;border-radius:2px"></div>
<div class="a" style="left:353px;top:325px;width:7px;height:7px;border-radius:50%;background:#d8dcf0"></div>
<div class="t" style="left:363px;top:324px;font-size:9px;color:#d8dcf0">2026/01/06 07:55开始投放全域推广，故本场流量不区分自然/付费</div>
<div class="t" style="left:344px;top:348px;font-size:10px;font-weight:bold;color:#f0f1f5">分钟级流量结构</div>
<div class="a" style="left:940px;top:355px;width:3px;height:3px;background:#4e5cf0"></div>
<div class="t" style="left:945px;top:351px;font-size:8.5px;color:#d0d3de">搜索</div>
<div class="t" style="left:343px;top:375px;font-size:7px;color:#8a8fa0">25</div>
<div class="t" style="left:343px;top:409px;font-size:7px;color:#8a8fa0">20</div>
<div class="t" style="left:343px;top:442px;font-size:7px;color:#8a8fa0">15</div>
<div class="t" style="left:343px;top:476px;font-size:7px;color:#8a8fa0">10</div>
<div class="t" style="left:345px;top:510px;font-size:7px;color:#8a8fa0">5</div>
<div class="t" style="left:345px;top:543px;font-size:7px;color:#8a8fa0">0</div>
<div class="t" style="left:346px;top:552px;font-size:7px;color:#9ea3b5">12:24</div>
<div class="t" style="left:474px;top:552px;font-size:7px;color:#9ea3b5">16:04</div>
<div class="t" style="left:603px;top:552px;font-size:7px;color:#9ea3b5">15:44</div>
<div class="t" style="left:733px;top:552px;font-size:7px;color:#9ea3b5">17:24</div>
<div class="t" style="left:862px;top:552px;font-size:7px;color:#9ea3b5">18:04</div>
<svg class="a" style="left:0;top:0" width="1000" height="600" viewBox="0 0 1000 600"><polygon points="356,547 356.0,479.6 357.2,511.1 358.3,487.1 359.5,503.5 360.6,478.0 361.8,507.7 362.9,503.8 364.1,473.4 365.3,504.4 366.4,476.2 367.6,479.2 368.7,515.5 369.9,510.9 371.1,487.3 372.2,510.2 373.4,452.6 374.5,508.7 375.7,447.3 376.8,505.4 378.0,469.6 379.2,515.5 380.3,470.9 381.5,507.4 382.6,474.6 383.8,510.4 384.9,477.5 386.1,514.4 387.3,516.4 388.4,476.6 389.6,482.7 390.7,504.3 391.9,468.2 393.0,507.3 394.2,478.1 395.4,488.8 396.5,508.6 397.7,473.8 398.8,502.3 400.0,472.9 401.2,497.1 402.3,432.4 403.5,486.6 404.6,506.3 405.8,504.0 406.9,471.5 408.1,504.9 409.3,470.8 410.4,467.8 411.6,505.1 412.7,502.9 413.9,488.3 415.0,485.3 416.2,516.2 417.4,484.8 418.5,509.3 419.7,484.0 420.8,484.7 422.0,517.3 423.1,505.2 424.3,471.0 425.5,508.2 426.6,473.5 427.8,516.2 428.9,479.2 430.1,508.3 431.3,485.2 432.4,518.2 433.6,479.4 434.7,503.5 435.9,482.2 437.0,506.2 438.2,473.4 439.4,445.9 440.5,488.3 441.7,505.5 442.8,479.4 444.0,506.5 445.1,495.2 446.3,519.1 447.5,496.1 448.6,517.7 449.8,497.4 450.9,510.5 452.1,508.1 453.2,486.5 454.4,521.6 455.6,478.6 456.7,515.7 457.9,488.6 459.0,523.1 460.2,500.6 461.4,524.5 462.5,459.4 463.7,516.1 464.8,494.6 466.0,492.8 467.1,516.7 468.3,488.5 469.5,487.8 470.6,511.1 471.8,502.4 472.9,502.3 474.1,512.6 475.2,498.2 476.4,492.7 477.6,523.6 478.7,491.7 479.9,517.9 481.0,493.6 482.2,525.2 483.3,505.2 484.5,517.1 485.7,497.2 486.8,497.9 488.0,527.2 489.1,473.9 490.3,519.3 491.5,512.4 492.6,526.6 493.8,515.8 494.9,531.3 496.1,501.9 497.2,528.3 498.4,500.4 499.6,524.0 500.7,500.6 501.9,508.6 503.0,522.2 504.2,497.0 505.3,521.9 506.5,493.4 507.7,528.1 508.8,515.9 510.0,527.9 511.1,531.4 512.3,495.0 513.4,516.4 514.6,506.0 515.8,521.8 516.9,509.9 518.1,507.7 519.2,527.2 520.4,501.7 521.6,514.2 522.7,524.8 523.9,508.2 525.0,530.6 526.2,514.5 527.3,532.6 528.5,512.7 529.7,533.9 530.8,506.0 532.0,521.0 533.1,502.0 534.3,530.8 535.4,508.6 536.6,514.8 537.8,502.8 538.9,518.4 540.1,507.6 541.2,526.9 542.4,501.7 543.5,532.6 544.7,475.0 545.9,534.3 547.0,497.2 548.2,516.2 549.3,524.9 550.5,502.5 551.7,520.2 552.8,527.2 554.0,512.4 555.1,513.7 556.3,522.4 557.4,500.3 558.6,531.1 559.8,500.4 560.9,515.7 562.1,509.2 563.2,531.5 564.4,506.3 565.5,519.6 566.7,523.1 567.9,496.9 569.0,521.8 570.2,518.5 571.3,497.5 572.5,507.2 573.6,516.5 574.8,518.0 576.0,497.9 577.1,528.4 578.3,534.5 579.4,513.9 580.6,499.5 581.8,496.2 582.9,496.9 584.1,529.7 585.2,519.1 586.4,516.4 587.5,534.3 588.7,506.9 589.9,525.2 591.0,510.3 592.2,525.7 593.3,516.4 594.5,522.4 595.6,513.5 596.8,514.5 598.0,533.6 599.1,478.3 600.3,526.5 601.4,501.8 602.6,521.2 603.7,504.0 604.9,516.6 606.1,515.8 607.2,523.5 608.4,486.6 609.5,534.6 610.7,501.1 611.9,527.3 613.0,529.2 614.2,515.5 615.3,495.8 616.5,528.1 617.6,495.3 618.8,521.4 620.0,531.4 621.1,507.1 622.3,514.7 623.4,519.2 624.6,493.8 625.7,519.5 626.9,487.8 628.1,501.4 629.2,503.3 630.4,519.1 631.5,509.6 632.7,516.5 633.8,507.1 635.0,529.1 636.2,501.7 637.3,529.9 638.5,498.3 639.6,516.5 640.8,497.4 642.0,532.4 643.1,530.8 644.3,498.7 645.4,522.1 646.6,509.7 647.7,523.1 648.9,509.9 650.1,534.8 651.2,497.2 652.4,515.6 653.5,513.0 654.7,480.9 655.8,521.7 657.0,503.4 658.2,518.2 659.3,514.6 660.5,499.8 661.6,509.1 662.8,515.3 663.9,509.0 665.1,520.2 666.3,516.4 667.4,512.1 668.6,526.1 669.7,513.2 670.9,534.2 672.1,515.0 673.2,515.7 674.4,528.8 675.5,500.5 676.7,528.6 677.8,496.6 679.0,534.5 680.2,512.6 681.3,517.3 682.5,506.6 683.6,516.6 684.8,505.7 685.9,533.7 687.1,524.3 688.3,499.2 689.4,518.2 690.6,514.2 691.7,532.7 692.9,507.9 694.0,527.6 695.2,504.0 696.4,515.6 697.5,495.6 698.7,531.4 699.8,499.4 701.0,523.9 702.2,500.2 703.3,521.5 704.5,507.6 705.6,487.6 706.8,526.5 707.9,514.3 709.1,524.4 710.3,504.0 711.4,494.6 712.6,518.5 713.7,528.1 714.9,508.8 716.0,524.0 717.2,509.6 718.4,534.8 719.5,501.9 720.7,524.5 721.8,497.4 723.0,518.4 724.1,505.8 725.3,529.5 726.5,531.0 727.6,512.6 728.8,516.7 729.9,493.5 731.1,529.2 732.3,498.5 733.4,506.6 734.6,509.2 735.7,528.7 736.9,504.2 738.0,523.4 739.2,519.7 740.4,504.3 741.5,514.8 742.7,506.3 743.8,526.9 745.0,505.0 746.1,533.7 747.3,498.7 748.5,519.7 749.6,506.8 750.8,527.6 751.9,511.2 753.1,532.0 754.2,511.8 755.4,526.2 756.6,507.9 757.7,515.0 758.9,498.3 760.0,515.0 761.2,514.9 762.4,527.9 763.5,501.2 764.7,532.6 765.8,509.4 767.0,534.2 768.1,505.3 769.3,512.4 770.5,530.9 771.6,493.7 772.8,505.2 773.9,517.5 775.1,503.5 776.2,531.2 777.4,509.1 778.6,509.1 779.7,533.1 780.9,531.0 782.0,509.5 783.2,529.3 784.3,498.1 785.5,525.5 786.7,498.7 787.8,520.9 789.0,498.5 790.1,526.2 791.3,499.8 792.5,529.0 793.6,508.5 794.8,524.2 795.9,492.7 797.1,521.6 798.2,498.9 799.4,495.3 800.6,515.2 801.7,515.5 802.9,515.9 804.0,502.5 805.2,525.8 806.3,506.5 807.5,526.3 808.7,495.5 809.8,530.3 811.0,529.5 812.1,531.9 813.3,510.4 814.4,516.6 815.6,502.0 816.8,531.7 817.9,508.4 819.1,519.2 820.2,502.9 821.4,517.6 822.6,489.4 823.7,518.7 824.9,511.0 826.0,528.7 827.2,494.1 828.3,515.7 829.5,507.5 830.7,516.1 831.8,498.5 833.0,512.5 834.1,510.5 835.3,476.2 836.4,498.5 837.6,522.1 838.8,495.8 839.9,515.8 841.1,488.5 842.2,519.4 843.4,526.0 844.5,476.0 845.7,518.8 846.9,500.1 848.0,514.6 849.2,520.7 850.3,501.1 851.5,531.9 852.7,508.0 853.8,519.5 855.0,495.5 856.1,517.9 857.3,529.4 858.4,497.4 859.6,513.3 860.8,492.2 861.9,527.1 863.1,490.8 864.2,525.1 865.4,493.5 866.5,523.2 867.7,499.3 868.9,501.4 870.0,518.2 871.2,493.8 872.3,519.5 873.5,504.4 874.6,524.5 875.8,502.9 877.0,517.1 878.1,488.1 879.3,528.2 880.4,496.7 881.6,521.7 882.8,508.3 883.9,520.2 885.1,489.9 886.2,525.1 887.4,491.1 888.5,513.1 889.7,496.8 890.9,522.0 892.0,492.5 893.2,530.4 894.3,509.6 895.5,514.6 896.6,473.5 897.8,525.7 899.0,492.8 900.1,529.0 901.3,506.2 902.4,525.4 903.6,494.5 904.7,512.8 905.9,497.3 907.1,512.1 908.2,511.3 909.4,524.5 910.5,499.2 911.7,529.3 912.9,511.1 914.0,515.4 915.2,487.7 916.3,524.9 917.5,509.3 918.6,529.8 919.8,499.0 921.0,479.6 922.1,513.2 923.3,499.5 924.4,502.4 925.6,514.4 926.7,510.9 927.9,531.1 929.1,499.5 930.2,528.3 931.4,529.1 932.5,490.5 933.7,504.0 934.8,518.1 936.0,509.0 937.2,521.4 938.3,490.3 939.5,523.0 940.6,509.3 941.8,526.8 943.0,525.6 944.1,489.3 945.3,493.0 946.4,512.4 947.6,493.3 948.7,524.1 949.9,497.5 951.1,514.0 952.2,524.5 953.4,508.7 954.5,490.6 955.7,512.1 956.8,501.9 958.0,529.7 959.2,491.6 960.3,479.6 961.5,491.1 962.6,528.6 963.8,489.9 964.9,508.2 966.1,521.4 967.3,492.7 968.4,496.5 969.6,513.8 970.7,500.2 971.9,526.2 973.1,498.9 974.2,476.2 975.4,510.0 976.5,509.1 977.7,528.2 978.8,500.8 980.0,521.5 980,547" fill="rgba(72,82,230,.07)"/><polyline points="356.0,479.6 357.2,511.1 358.3,487.1 359.5,503.5 360.6,478.0 361.8,507.7 362.9,503.8 364.1,473.4 365.3,504.4 366.4,476.2 367.6,479.2 368.7,515.5 369.9,510.9 371.1,487.3 372.2,510.2 373.4,452.6 374.5,508.7 375.7,447.3 376.8,505.4 378.0,469.6 379.2,515.5 380.3,470.9 381.5,507.4 382.6,474.6 383.8,510.4 384.9,477.5 386.1,514.4 387.3,516.4 388.4,476.6 389.6,482.7 390.7,504.3 391.9,468.2 393.0,507.3 394.2,478.1 395.4,488.8 396.5,508.6 397.7,473.8 398.8,502.3 400.0,472.9 401.2,497.1 402.3,432.4 403.5,486.6 404.6,506.3 405.8,504.0 406.9,471.5 408.1,504.9 409.3,470.8 410.4,467.8 411.6,505.1 412.7,502.9 413.9,488.3 415.0,485.3 416.2,516.2 417.4,484.8 418.5,509.3 419.7,484.0 420.8,484.7 422.0,517.3 423.1,505.2 424.3,471.0 425.5,508.2 426.6,473.5 427.8,516.2 428.9,479.2 430.1,508.3 431.3,485.2 432.4,518.2 433.6,479.4 434.7,503.5 435.9,482.2 437.0,506.2 438.2,473.4 439.4,445.9 440.5,488.3 441.7,505.5 442.8,479.4 444.0,506.5 445.1,495.2 446.3,519.1 447.5,496.1 448.6,517.7 449.8,497.4 450.9,510.5 452.1,508.1 453.2,486.5 454.4,521.6 455.6,478.6 456.7,515.7 457.9,488.6 459.0,523.1 460.2,500.6 461.4,524.5 462.5,459.4 463.7,516.1 464.8,494.6 466.0,492.8 467.1,516.7 468.3,488.5 469.5,487.8 470.6,511.1 471.8,502.4 472.9,502.3 474.1,512.6 475.2,498.2 476.4,492.7 477.6,523.6 478.7,491.7 479.9,517.9 481.0,493.6 482.2,525.2 483.3,505.2 484.5,517.1 485.7,497.2 486.8,497.9 488.0,527.2 489.1,473.9 490.3,519.3 491.5,512.4 492.6,526.6 493.8,515.8 494.9,531.3 496.1,501.9 497.2,528.3 498.4,500.4 499.6,524.0 500.7,500.6 501.9,508.6 503.0,522.2 504.2,497.0 505.3,521.9 506.5,493.4 507.7,528.1 508.8,515.9 510.0,527.9 511.1,531.4 512.3,495.0 513.4,516.4 514.6,506.0 515.8,521.8 516.9,509.9 518.1,507.7 519.2,527.2 520.4,501.7 521.6,514.2 522.7,524.8 523.9,508.2 525.0,530.6 526.2,514.5 527.3,532.6 528.5,512.7 529.7,533.9 530.8,506.0 532.0,521.0 533.1,502.0 534.3,530.8 535.4,508.6 536.6,514.8 537.8,502.8 538.9,518.4 540.1,507.6 541.2,526.9 542.4,501.7 543.5,532.6 544.7,475.0 545.9,534.3 547.0,497.2 548.2,516.2 549.3,524.9 550.5,502.5 551.7,520.2 552.8,527.2 554.0,512.4 555.1,513.7 556.3,522.4 557.4,500.3 558.6,531.1 559.8,500.4 560.9,515.7 562.1,509.2 563.2,531.5 564.4,506.3 565.5,519.6 566.7,523.1 567.9,496.9 569.0,521.8 570.2,518.5 571.3,497.5 572.5,507.2 573.6,516.5 574.8,518.0 576.0,497.9 577.1,528.4 578.3,534.5 579.4,513.9 580.6,499.5 581.8,496.2 582.9,496.9 584.1,529.7 585.2,519.1 586.4,516.4 587.5,534.3 588.7,506.9 589.9,525.2 591.0,510.3 592.2,525.7 593.3,516.4 594.5,522.4 595.6,513.5 596.8,514.5 598.0,533.6 599.1,478.3 600.3,526.5 601.4,501.8 602.6,521.2 603.7,504.0 604.9,516.6 606.1,515.8 607.2,523.5 608.4,486.6 609.5,534.6 610.7,501.1 611.9,527.3 613.0,529.2 614.2,515.5 615.3,495.8 616.5,528.1 617.6,495.3 618.8,521.4 620.0,531.4 621.1,507.1 622.3,514.7 623.4,519.2 624.6,493.8 625.7,519.5 626.9,487.8 628.1,501.4 629.2,503.3 630.4,519.1 631.5,509.6 632.7,516.5 633.8,507.1 635.0,529.1 636.2,501.7 637.3,529.9 638.5,498.3 639.6,516.5 640.8,497.4 642.0,532.4 643.1,530.8 644.3,498.7 645.4,522.1 646.6,509.7 647.7,523.1 648.9,509.9 650.1,534.8 651.2,497.2 652.4,515.6 653.5,513.0 654.7,480.9 655.8,521.7 657.0,503.4 658.2,518.2 659.3,514.6 660.5,499.8 661.6,509.1 662.8,515.3 663.9,509.0 665.1,520.2 666.3,516.4 667.4,512.1 668.6,526.1 669.7,513.2 670.9,534.2 672.1,515.0 673.2,515.7 674.4,528.8 675.5,500.5 676.7,528.6 677.8,496.6 679.0,534.5 680.2,512.6 681.3,517.3 682.5,506.6 683.6,516.6 684.8,505.7 685.9,533.7 687.1,524.3 688.3,499.2 689.4,518.2 690.6,514.2 691.7,532.7 692.9,507.9 694.0,527.6 695.2,504.0 696.4,515.6 697.5,495.6 698.7,531.4 699.8,499.4 701.0,523.9 702.2,500.2 703.3,521.5 704.5,507.6 705.6,487.6 706.8,526.5 707.9,514.3 709.1,524.4 710.3,504.0 711.4,494.6 712.6,518.5 713.7,528.1 714.9,508.8 716.0,524.0 717.2,509.6 718.4,534.8 719.5,501.9 720.7,524.5 721.8,497.4 723.0,518.4 724.1,505.8 725.3,529.5 726.5,531.0 727.6,512.6 728.8,516.7 729.9,493.5 731.1,529.2 732.3,498.5 733.4,506.6 734.6,509.2 735.7,528.7 736.9,504.2 738.0,523.4 739.2,519.7 740.4,504.3 741.5,514.8 742.7,506.3 743.8,526.9 745.0,505.0 746.1,533.7 747.3,498.7 748.5,519.7 749.6,506.8 750.8,527.6 751.9,511.2 753.1,532.0 754.2,511.8 755.4,526.2 756.6,507.9 757.7,515.0 758.9,498.3 760.0,515.0 761.2,514.9 762.4,527.9 763.5,501.2 764.7,532.6 765.8,509.4 767.0,534.2 768.1,505.3 769.3,512.4 770.5,530.9 771.6,493.7 772.8,505.2 773.9,517.5 775.1,503.5 776.2,531.2 777.4,509.1 778.6,509.1 779.7,533.1 780.9,531.0 782.0,509.5 783.2,529.3 784.3,498.1 785.5,525.5 786.7,498.7 787.8,520.9 789.0,498.5 790.1,526.2 791.3,499.8 792.5,529.0 793.6,508.5 794.8,524.2 795.9,492.7 797.1,521.6 798.2,498.9 799.4,495.3 800.6,515.2 801.7,515.5 802.9,515.9 804.0,502.5 805.2,525.8 806.3,506.5 807.5,526.3 808.7,495.5 809.8,530.3 811.0,529.5 812.1,531.9 813.3,510.4 814.4,516.6 815.6,502.0 816.8,531.7 817.9,508.4 819.1,519.2 820.2,502.9 821.4,517.6 822.6,489.4 823.7,518.7 824.9,511.0 826.0,528.7 827.2,494.1 828.3,515.7 829.5,507.5 830.7,516.1 831.8,498.5 833.0,512.5 834.1,510.5 835.3,476.2 836.4,498.5 837.6,522.1 838.8,495.8 839.9,515.8 841.1,488.5 842.2,519.4 843.4,526.0 844.5,476.0 845.7,518.8 846.9,500.1 848.0,514.6 849.2,520.7 850.3,501.1 851.5,531.9 852.7,508.0 853.8,519.5 855.0,495.5 856.1,517.9 857.3,529.4 858.4,497.4 859.6,513.3 860.8,492.2 861.9,527.1 863.1,490.8 864.2,525.1 865.4,493.5 866.5,523.2 867.7,499.3 868.9,501.4 870.0,518.2 871.2,493.8 872.3,519.5 873.5,504.4 874.6,524.5 875.8,502.9 877.0,517.1 878.1,488.1 879.3,528.2 880.4,496.7 881.6,521.7 882.8,508.3 883.9,520.2 885.1,489.9 886.2,525.1 887.4,491.1 888.5,513.1 889.7,496.8 890.9,522.0 892.0,492.5 893.2,530.4 894.3,509.6 895.5,514.6 896.6,473.5 897.8,525.7 899.0,492.8 900.1,529.0 901.3,506.2 902.4,525.4 903.6,494.5 904.7,512.8 905.9,497.3 907.1,512.1 908.2,511.3 909.4,524.5 910.5,499.2 911.7,529.3 912.9,511.1 914.0,515.4 915.2,487.7 916.3,524.9 917.5,509.3 918.6,529.8 919.8,499.0 921.0,479.6 922.1,513.2 923.3,499.5 924.4,502.4 925.6,514.4 926.7,510.9 927.9,531.1 929.1,499.5 930.2,528.3 931.4,529.1 932.5,490.5 933.7,504.0 934.8,518.1 936.0,509.0 937.2,521.4 938.3,490.3 939.5,523.0 940.6,509.3 941.8,526.8 943.0,525.6 944.1,489.3 945.3,493.0 946.4,512.4 947.6,493.3 948.7,524.1 949.9,497.5 951.1,514.0 952.2,524.5 953.4,508.7 954.5,490.6 955.7,512.1 956.8,501.9 958.0,529.7 959.2,491.6 960.3,479.6 961.5,491.1 962.6,528.6 963.8,489.9 964.9,508.2 966.1,521.4 967.3,492.7 968.4,496.5 969.6,513.8 970.7,500.2 971.9,526.2 973.1,498.9 974.2,476.2 975.4,510.0 976.5,509.1 977.7,528.2 978.8,500.8 980.0,521.5" fill="none" stroke="#4b55ea" stroke-width="1.15" stroke-linejoin="bevel"/></svg>
<div class="t" style="left:344px;top:574px;font-size:10px;font-weight:bold;color:#f0f1f5">全场流量结构</div>
<div class="t" style="left:344px;top:597.2px;font-size:8.5px;color:#8a8fa0">渠道名称</div>
<div class="t" style="left:276px;width:200px;text-align:right;top:597.2px;font-size:8.5px;color:#8a8fa0">流量占比</div>
<div class="t" style="left:350px;width:200px;text-align:right;top:597.2px;font-size:8.5px;color:#8a8fa0">成交金额占比</div>
<div class="t" style="left:445px;width:200px;text-align:right;top:597.2px;font-size:8.5px;color:#8a8fa0">渠道千次观看成交</div>
<div class="t" style="left:678px;top:597.2px;font-size:8.5px;color:#8a8fa0">渠道名称</div>
<div class="t" style="left:611px;width:200px;text-align:right;top:597.2px;font-size:8.5px;color:#8a8fa0">流量占比</div>
<div class="t" style="left:685px;width:200px;text-align:right;top:597.2px;font-size:8.5px;color:#8a8fa0">成交金额占比</div>
<div class="t" style="left:779px;width:200px;text-align:right;top:597.2px;font-size:8.5px;color:#8a8fa0">渠道千次观看成交</div>
<div class="t" style="left:344px;top:613.2px;font-size:8.5px;color:#e8eaf0">搜索</div>
<div class="t" style="left:276px;width:200px;text-align:right;top:613.2px;font-size:8.5px;color:#e8eaf0">72.79%</div>
<div class="t" style="left:350px;width:200px;text-align:right;top:613.2px;font-size:8.5px;color:#e8eaf0">12.47%</div>
<div class="t" style="left:445px;width:200px;text-align:right;top:613.2px;font-size:8.5px;color:#e8eaf0">¥123.32</div>
<div class="t" style="left:678px;top:613.2px;font-size:8.5px;color:#e8eaf0">关注</div>
<div class="t" style="left:611px;width:200px;text-align:right;top:613.2px;font-size:8.5px;color:#e8eaf0">0.53%</div>
<div class="t" style="left:685px;width:200px;text-align:right;top:613.2px;font-size:8.5px;color:#e8eaf0">-</div>
<div class="t" style="left:779px;width:200px;text-align:right;top:613.2px;font-size:8.5px;color:#e8eaf0">-</div>
<div class="t" style="left:344px;top:627.7px;font-size:8.5px;color:#e8eaf0">直播推荐</div>
<div class="t" style="left:276px;width:200px;text-align:right;top:627.7px;font-size:8.5px;color:#e8eaf0">11.17%</div>
<div class="t" style="left:350px;width:200px;text-align:right;top:627.7px;font-size:8.5px;color:#e8eaf0">24.63%</div>
<div class="t" style="left:445px;width:200px;text-align:right;top:627.7px;font-size:8.5px;color:#e8eaf0">¥1,587.65</div>
<div class="t" style="left:678px;top:627.7px;font-size:8.5px;color:#e8eaf0">短视频引流</div>
<div class="t" style="left:611px;width:200px;text-align:right;top:627.7px;font-size:8.5px;color:#e8eaf0">0.51%</div>
<div class="t" style="left:685px;width:200px;text-align:right;top:627.7px;font-size:8.5px;color:#e8eaf0">-</div>
<div class="t" style="left:779px;width:200px;text-align:right;top:627.7px;font-size:8.5px;color:#e8eaf0">-</div>
<div class="t" style="left:344px;top:642.2px;font-size:8.5px;color:#e8eaf0">抖音商城推荐</div>
<div class="t" style="left:276px;width:200px;text-align:right;top:642.2px;font-size:8.5px;color:#e8eaf0">10.63%</div>
<div class="t" style="left:350px;width:200px;text-align:right;top:642.2px;font-size:8.5px;color:#e8eaf0">61.01%</div>
<div class="t" style="left:445px;width:200px;text-align:right;top:642.2px;font-size:8.5px;color:#e8eaf0">¥4,130</div>
<div class="t" style="left:678px;top:642.2px;font-size:8.5px;color:#e8eaf0">个人主页&店铺&...</div>
<div class="t" style="left:611px;width:200px;text-align:right;top:642.2px;font-size:8.5px;color:#e8eaf0">0.47%</div>
<div class="t" style="left:685px;width:200px;text-align:right;top:642.2px;font-size:8.5px;color:#e8eaf0">-</div>
<div class="t" style="left:779px;width:200px;text-align:right;top:642.2px;font-size:8.5px;color:#e8eaf0">-</div>
<div class="t" style="left:344px;top:656.7px;font-size:8.5px;color:#e8eaf0">其他⊙</div>
<div class="t" style="left:276px;width:200px;text-align:right;top:656.7px;font-size:8.5px;color:#e8eaf0">3.68%</div>
<div class="t" style="left:350px;width:200px;text-align:right;top:656.7px;font-size:8.5px;color:#e8eaf0">-</div>
<div class="t" style="left:445px;width:200px;text-align:right;top:656.7px;font-size:8.5px;color:#e8eaf0">-</div>
<div class="t" style="left:678px;top:656.7px;font-size:8.5px;color:#e8eaf0">头条西瓜</div>
<div class="t" style="left:611px;width:200px;text-align:right;top:656.7px;font-size:8.5px;color:#e8eaf0">0.18%</div>
<div class="t" style="left:685px;width:200px;text-align:right;top:656.7px;font-size:8.5px;color:#e8eaf0">1.89%</div>
<div class="t" style="left:779px;width:200px;text-align:right;top:656.7px;font-size:8.5px;color:#e8eaf0">¥7,666.67</div>
<div class="t" style="left:350px;top:675px;font-size:7px;color:#e0e2ea">全部流量渠道 ›</div>
<!-- dark panel -->
<div class="a" style="left:1121px;top:26px;width:290px;height:746px;background:#1b1b1e"></div>
<div class="a" style="left:1121px;top:26px;width:290px;height:35px;background:#1e1e21"></div>
<div class="a" style="left:1333px;top:44px;width:10px;height:1px;background:#bdbfc4"></div>
<div class="a" style="left:1361px;top:37px;width:10px;height:10px;border:1px solid #bdbfc4"></div>
<svg class="a" style="left:1390px;top:37px" width="10" height="10" viewBox="0 0 10 10"><path d="M.5.5l9 9M9.5.5l-9 9" stroke="#bdbfc4" stroke-width="1.1"/></svg>
<div class="t" style="left:1120px;width:100px;text-align:center;top:73px;font-size:11.5px;color:#c4c6cb">233</div>
<div class="t" style="left:1120px;width:100px;text-align:center;top:95px;font-size:11px;color:#b4b6bc">累计观看</div>
<div class="t" style="left:1215px;width:100px;text-align:center;top:73px;font-size:11.5px;color:#c4c6cb">1</div>
<div class="t" style="left:1215px;width:100px;text-align:center;top:95px;font-size:11px;color:#b4b6bc">点赞</div>
<div class="t" style="left:1310px;width:100px;text-align:center;top:73px;font-size:11.5px;color:#c4c6cb">1.3万</div>
<div class="t" style="left:1310px;width:100px;text-align:center;top:95px;font-size:11px;color:#b4b6bc">未看</div>
<svg class="a" style="left:1376px;top:88px" width="7" height="5" viewBox="0 0 7 5"><path d="M0 0h7L3.5 5z" fill="#e0e0e4"/></svg>
<div class="a" style="left:1140px;top:117px;width:254px;height:1px;background:#2c2d31"></div>
<div class="t" style="left:1120px;width:100px;text-align:center;top:133px;font-size:11px;color:#d4d6da">聊天互动</div>
<div class="t" style="left:1215px;width:100px;text-align:center;top:133px;font-size:11px;font-weight:bold;color:#f2f2f4">连线</div>
<div class="t" style="left:1310px;width:100px;text-align:center;top:133px;font-size:11px;color:#d4d6da">观众·70</div>
<div class="a" style="left:1258px;top:154px;width:15px;height:2px;background:#f2f2f4"></div>
<div class="a" style="left:1134px;top:168px;width:31px;height:31px;border-radius:6px;background:#0c4089"></div>
<div class="t" style="left:1143px;top:177px;font-size:12px;color:#eef2f8">我</div>
<div class="t" style="left:1169px;top:170px;font-size:10.5px;color:#d6d8dc">我</div>
<svg class="a" style="left:1328px;top:178px" width="14" height="10" viewBox="0 0 14 10"><rect x="0.5" y="1" width="9" height="8" rx="1.2" fill="#dcdde0"/><path d="M9.5 4l4-2.5v7l-4-2.5z" fill="#dcdde0"/></svg>
<svg class="a" style="left:1356px;top:176px" width="12" height="14" viewBox="0 0 12 14"><rect x="3.5" y="0.5" width="5" height="8.5" rx="2.5" fill="#dcdde0"/><path d="M1.5 6.5a4.5 4.5 0 0 0 9 0M6 11v2.5" fill="none" stroke="#dcdde0" stroke-width="1"/></svg>
<svg class="a" style="left:1382px;top:181px" width="12" height="4" viewBox="0 0 12 4"><circle cx="2" cy="2" r="1.1" fill="#e0e0e4"/><circle cx="6" cy="2" r="1.1" fill="#e0e0e4"/><circle cx="10" cy="2" r="1.1" fill="#e0e0e4"/></svg>
<div class="a" style="left:1134px;top:212px;width:31px;height:31px;border-radius:6px;background:#0c4089"></div>
<div class="t" style="left:1137px;top:221px;font-size:12px;color:#eef2f8">可柱</div>
<div class="t" style="left:1169px;top:222px;font-size:10.5px;color:#d6d8dc">马可柱</div>
<svg class="a" style="left:1328px;top:222px" width="14" height="10" viewBox="0 0 14 10"><rect x="0.5" y="1" width="9" height="8" rx="1.2" fill="#dcdde0"/><path d="M9.5 4l4-2.5v7l-4-2.5z" fill="#dcdde0"/></svg>
<svg class="a" style="left:1356px;top:220px" width="12" height="14" viewBox="0 0 12 14"><rect x="3.5" y="0.5" width="5" height="8.5" rx="2.5" fill="#dcdde0"/><path d="M1.5 6.5a4.5 4.5 0 0 0 9 0M6 11v2.5" fill="none" stroke="#dcdde0" stroke-width="1"/></svg>
<svg class="a" style="left:1382px;top:225px" width="12" height="4" viewBox="0 0 12 4"><circle cx="2" cy="2" r="1.1" fill="#e0e0e4"/><circle cx="6" cy="2" r="1.1" fill="#e0e0e4"/><circle cx="10" cy="2" r="1.1" fill="#e0e0e4"/></svg>
<div class="a" style="left:1134px;top:255px;width:31px;height:31px;border-radius:6px;background:linear-gradient(180deg,#7aa6d8 0%,#a9c6e6 45%,#7f8e98 62%,#55606a 100%)"></div>
<div class="a" style="left:1146px;top:260px;width:6px;height:22px;border-radius:2px;background:#1d2a3c"></div>
<div class="t" style="left:1169px;top:265px;font-size:10.5px;color:#d6d8dc">孙兵强</div>
<svg class="a" style="left:1328px;top:265px" width="14" height="10" viewBox="0 0 14 10"><rect x="0.5" y="1" width="9" height="8" rx="1.2" fill="#dcdde0"/><path d="M9.5 4l4-2.5v7l-4-2.5z" fill="#dcdde0"/><path d="M1 9.5L9.5 .5" stroke="#1b1b1e" stroke-width="2"/><path d="M1 9.5L9.5 .5" stroke="#e0454a" stroke-width="1"/></svg>
<svg class="a" style="left:1356px;top:263px" width="12" height="14" viewBox="0 0 12 14"><rect x="3.5" y="0.5" width="5" height="8.5" rx="2.5" fill="#dcdde0"/><path d="M1.5 6.5a4.5 4.5 0 0 0 9 0M6 11v2.5" fill="none" stroke="#dcdde0" stroke-width="1"/><path d="M1 12.5L11 1.5" stroke="#1b1b1e" stroke-width="2"/><path d="M1 12.5L11 1.5" stroke="#e0454a" stroke-width="1"/></svg>
<svg class="a" style="left:1382px;top:268px" width="12" height="4" viewBox="0 0 12 4"><circle cx="2" cy="2" r="1.1" fill="#e0e0e4"/><circle cx="6" cy="2" r="1.1" fill="#e0e0e4"/><circle cx="10" cy="2" r="1.1" fill="#e0e0e4"/></svg>
<div class="a" style="left:1134px;top:299px;width:31px;height:31px;border-radius:6px;background:#0c4089"></div>
<div class="t" style="left:1137px;top:308px;font-size:12px;color:#eef2f8">丕雄</div>
<div class="t" style="left:1169px;top:309px;font-size:10.5px;color:#d6d8dc">陈丕雄</div>
<svg class="a" style="left:1328px;top:309px" width="14" height="10" viewBox="0 0 14 10"><rect x="0.5" y="1" width="9" height="8" rx="1.2" fill="#dcdde0"/><path d="M9.5 4l4-2.5v7l-4-2.5z" fill="#dcdde0"/></svg>
<svg class="a" style="left:1356px;top:307px" width="12" height="14" viewBox="0 0 12 14"><rect x="3.5" y="0.5" width="5" height="8.5" rx="2.5" fill="#dcdde0"/><path d="M1.5 6.5a4.5 4.5 0 0 0 9 0M6 11v2.5" fill="none" stroke="#dcdde0" stroke-width="1"/><path d="M1 12.5L11 1.5" stroke="#1b1b1e" stroke-width="2"/><path d="M1 12.5L11 1.5" stroke="#e0454a" stroke-width="1"/></svg>
<svg class="a" style="left:1382px;top:312px" width="12" height="4" viewBox="0 0 12 4"><circle cx="2" cy="2" r="1.1" fill="#e0e0e4"/><circle cx="6" cy="2" r="1.1" fill="#e0e0e4"/><circle cx="10" cy="2" r="1.1" fill="#e0e0e4"/></svg>
<div class="a" style="left:1134px;top:342px;width:31px;height:31px;border-radius:6px;background:#0c4089"></div>
<div class="t" style="left:1137px;top:351px;font-size:12px;color:#eef2f8">传传</div>
<div class="t" style="left:1169px;top:352px;font-size:10.5px;color:#d6d8dc">李传传</div>
<svg class="a" style="left:1328px;top:352px" width="14" height="10" viewBox="0 0 14 10"><rect x="0.5" y="1" width="9" height="8" rx="1.2" fill="#dcdde0"/><path d="M9.5 4l4-2.5v7l-4-2.5z" fill="#dcdde0"/><path d="M1 9.5L9.5 .5" stroke="#1b1b1e" stroke-width="2"/><path d="M1 9.5L9.5 .5" stroke="#e0454a" stroke-width="1"/></svg>
<svg class="a" style="left:1356px;top:350px" width="12" height="14" viewBox="0 0 12 14"><rect x="3.5" y="0.5" width="5" height="8.5" rx="2.5" fill="#dcdde0"/><path d="M1.5 6.5a4.5 4.5 0 0 0 9 0M6 11v2.5" fill="none" stroke="#dcdde0" stroke-width="1"/></svg>
<svg class="a" style="left:1382px;top:355px" width="12" height="4" viewBox="0 0 12 4"><circle cx="2" cy="2" r="1.1" fill="#e0e0e4"/><circle cx="6" cy="2" r="1.1" fill="#e0e0e4"/><circle cx="10" cy="2" r="1.1" fill="#e0e0e4"/></svg>
<div class="a" style="left:1134px;top:386px;width:31px;height:31px;border-radius:6px;background:#0c4089"></div>
<div class="t" style="left:1137px;top:395px;font-size:12px;color:#eef2f8">忠忠</div>
<div class="t" style="left:1169px;top:396px;font-size:10.5px;color:#d6d8dc">忠忠</div>
<svg class="a" style="left:1328px;top:396px" width="14" height="10" viewBox="0 0 14 10"><rect x="0.5" y="1" width="9" height="8" rx="1.2" fill="#dcdde0"/><path d="M9.5 4l4-2.5v7l-4-2.5z" fill="#dcdde0"/></svg>
<svg class="a" style="left:1356px;top:394px" width="12" height="14" viewBox="0 0 12 14"><rect x="3.5" y="0.5" width="5" height="8.5" rx="2.5" fill="#dcdde0"/><path d="M1.5 6.5a4.5 4.5 0 0 0 9 0M6 11v2.5" fill="none" stroke="#dcdde0" stroke-width="1"/><path d="M1 12.5L11 1.5" stroke="#1b1b1e" stroke-width="2"/><path d="M1 12.5L11 1.5" stroke="#e0454a" stroke-width="1"/></svg>
<svg class="a" style="left:1382px;top:399px" width="12" height="4" viewBox="0 0 12 4"><circle cx="2" cy="2" r="1.1" fill="#e0e0e4"/><circle cx="6" cy="2" r="1.1" fill="#e0e0e4"/><circle cx="10" cy="2" r="1.1" fill="#e0e0e4"/></svg>
<div class="a" style="left:1134px;top:429px;width:31px;height:31px;border-radius:6px;background:#0c4089"></div>
<div class="t" style="left:1137px;top:438px;font-size:12px;color:#eef2f8">小平</div>
<div class="t" style="left:1169px;top:439px;font-size:10.5px;color:#d6d8dc">戴小平</div>
<svg class="a" style="left:1328px;top:439px" width="14" height="10" viewBox="0 0 14 10"><rect x="0.5" y="1" width="9" height="8" rx="1.2" fill="#dcdde0"/><path d="M9.5 4l4-2.5v7l-4-2.5z" fill="#dcdde0"/><path d="M1 9.5L9.5 .5" stroke="#1b1b1e" stroke-width="2"/><path d="M1 9.5L9.5 .5" stroke="#e0454a" stroke-width="1"/></svg>
<svg class="a" style="left:1356px;top:437px" width="12" height="14" viewBox="0 0 12 14"><rect x="3.5" y="0.5" width="5" height="8.5" rx="2.5" fill="#dcdde0"/><path d="M1.5 6.5a4.5 4.5 0 0 0 9 0M6 11v2.5" fill="none" stroke="#dcdde0" stroke-width="1"/><path d="M1 12.5L11 1.5" stroke="#1b1b1e" stroke-width="2"/><path d="M1 12.5L11 1.5" stroke="#e0454a" stroke-width="1"/></svg>
<svg class="a" style="left:1382px;top:442px" width="12" height="4" viewBox="0 0 12 4"><circle cx="2" cy="2" r="1.1" fill="#e0e0e4"/><circle cx="6" cy="2" r="1.1" fill="#e0e0e4"/><circle cx="10" cy="2" r="1.1" fill="#e0e0e4"/></svg>
<div class="a" style="left:1134px;top:473px;width:31px;height:31px;border-radius:6px;background:#0c4089"></div>
<div class="t" style="left:1137px;top:482px;font-size:12px;color:#eef2f8">传龙</div>
<div class="t" style="left:1169px;top:483px;font-size:10.5px;color:#d6d8dc">孙传龙</div>
<svg class="a" style="left:1328px;top:483px" width="14" height="10" viewBox="0 0 14 10"><rect x="0.5" y="1" width="9" height="8" rx="1.2" fill="#dcdde0"/><path d="M9.5 4l4-2.5v7l-4-2.5z" fill="#dcdde0"/></svg>
<svg class="a" style="left:1356px;top:481px" width="12" height="14" viewBox="0 0 12 14"><rect x="3.5" y="0.5" width="5" height="8.5" rx="2.5" fill="#dcdde0"/><path d="M1.5 6.5a4.5 4.5 0 0 0 9 0M6 11v2.5" fill="none" stroke="#dcdde0" stroke-width="1"/><path d="M1 12.5L11 1.5" stroke="#1b1b1e" stroke-width="2"/><path d="M1 12.5L11 1.5" stroke="#e0454a" stroke-width="1"/></svg>
<svg class="a" style="left:1382px;top:486px" width="12" height="4" viewBox="0 0 12 4"><circle cx="2" cy="2" r="1.1" fill="#e0e0e4"/><circle cx="6" cy="2" r="1.1" fill="#e0e0e4"/><circle cx="10" cy="2" r="1.1" fill="#e0e0e4"/></svg>
<div class="a" style="left:1170px;top:186px;width:22px;height:11px;border:1px solid #245a34;border-radius:6px"></div>
<div class="t" style="left:1170px;width:22px;text-align:center;top:188px;font-size:7.5px;color:#2fc25b">主播</div>
<div class="a" style="left:1196px;top:186px;width:30px;height:11px;border:1px solid #245a34;border-radius:6px"></div>
<div class="t" style="left:1196px;width:30px;text-align:center;top:188px;font-size:7.5px;color:#2fc25b">主画面</div>
<div class="a" style="left:1230px;top:186px;width:30px;height:11px;border:1px solid #245a34;border-radius:6px"></div>
<div class="t" style="left:1230px;width:30px;text-align:center;top:188px;font-size:7.5px;color:#2fc25b">共享中</div>
<!-- taskbar -->
<div class="a" style="left:0;top:800px;width:1476px;height:6px;background:#dfe4f4"></div>
<div class="a" style="left:0;top:806px;width:1476px;height:34px;background:#1d2933"></div>
<div class="a" style="left:0;top:837px;width:1476px;height:3px;background:#06080a"></div>
<div class="a" style="left:858px;top:806px;width:81px;height:31px;background:#3a4650"></div>
<div class="a" style="left:75px;top:835px;width:79px;height:2px;background:#9aa3ad"></div>
<div class="t" style="left:101px;top:817px;font-size:9.6px;color:#f4f6f8">三星百应B...</div>
<div class="a" style="left:166px;top:813px;width:18px;height:18px;border-radius:3px;background:#dfe9f5"></div>
<div class="a" style="left:171px;top:818px;width:4px;height:4px;background:#f25022"></div><div class="a" style="left:176px;top:818px;width:4px;height:4px;background:#7fba00"></div><div class="a" style="left:171px;top:823px;width:4px;height:4px;background:#00a4ef"></div><div class="a" style="left:176px;top:823px;width:4px;height:4px;background:#ffb900"></div>
<div class="a" style="left:196px;top:835px;width:79px;height:2px;background:#9aa3ad"></div>
<svg class="a" style="left:199px;top:813px" width="20" height="18" viewBox="0 0 20 18"><path d="M1 9l9-2 2-6 6 8-8 8z" fill="#2d8ef0"/><path d="M1 9l9-2 0 10z" fill="#42c3f7"/></svg>
<div class="t" style="left:223px;top:817px;font-size:9.6px;color:#f4f6f8">网易UU远程</div>
<div class="a" style="left:281px;top:835px;width:79px;height:2px;background:#9aa3ad"></div>
<svg class="a" style="left:285px;top:813px" width="20" height="18" viewBox="0 0 20 18"><path d="M1 9l9-2 2-6 6 8-8 8z" fill="#2d8ef0"/><path d="M1 9l9-2 0 10z" fill="#42c3f7"/></svg>
<div class="t" style="left:307px;top:817px;font-size:9.6px;color:#f4f6f8">WIN-NKI...</div>
<div class="a" style="left:366px;top:835px;width:79px;height:2px;background:#9aa3ad"></div>
<svg class="a" style="left:370px;top:813px" width="20" height="18" viewBox="0 0 20 18"><path d="M1 9l9-2 2-6 6 8-8 8z" fill="#2d8ef0"/><path d="M1 9l9-2 0 10z" fill="#42c3f7"/></svg>
<div class="t" style="left:392px;top:817px;font-size:9.6px;color:#f4f6f8">4060</div>
<div class="a" style="left:457px;top:813px;width:18px;height:18px;border-radius:4px;background:#000"></div>
<svg class="a" style="left:460px;top:817px" width="12" height="10" viewBox="0 0 12 10"><path d="M1 1h10L1 9h10" fill="none" stroke="#fff" stroke-width="1.6"/></svg>
<svg class="a" style="left:492px;top:814px" width="20" height="16" viewBox="0 0 20 16"><path d="M1 2l4 12 5-9 5 9 4-12" fill="none" stroke="#e2322a" stroke-width="3"/></svg>
<div class="a" style="left:523px;top:835px;width:78px;height:2px;background:#9aa3ad"></div>
<div class="a" style="left:526px;top:813px;width:19px;height:19px;border-radius:50%;background:#b07ce6"></div>
<div class="a" style="left:530px;top:818px;width:11px;height:9px;border-radius:40%;background:#fff"></div>
<div class="t" style="left:547px;top:817px;font-size:9.6px;color:#f4f6f8">Clash Ver...</div>
<div class="a" style="left:608px;top:835px;width:79px;height:2px;background:#9aa3ad"></div>
<div class="a" style="left:611px;top:813px;width:19px;height:19px;border-radius:4px;background:#27c04a"></div>
<div class="a" style="left:614px;top:817px;width:9px;height:7px;border-radius:50%;background:#fff"></div><div class="a" style="left:619px;top:821px;width:8px;height:6px;border-radius:50%;background:#e8f8ea"></div>
<div class="t" style="left:633px;top:817px;font-size:9.6px;color:#f4f6f8">微信</div>
<div class="a" style="left:693px;top:835px;width:79px;height:2px;background:#9aa3ad"></div>
<div class="a" style="left:696px;top:813px;width:19px;height:19px;border-radius:4px;background:#27c04a"></div>
<div class="a" style="left:699px;top:817px;width:9px;height:7px;border-radius:50%;background:#fff"></div><div class="a" style="left:704px;top:821px;width:8px;height:6px;border-radius:50%;background:#e8f8ea"></div>
<div class="t" style="left:718px;top:817px;font-size:9.6px;color:#f4f6f8">图片和视频</div>
<div class="a" style="left:778px;top:835px;width:79px;height:2px;background:#9aa3ad"></div>
<div class="a" style="left:782px;top:813px;width:18px;height:18px;border-radius:4px;background:#1e8ef5"></div>
<svg class="a" style="left:786px;top:816px" width="11" height="13" viewBox="0 0 11 13"><path d="M1 1l9 4-3 2 2 1-6 5 2-4-3-1z" fill="#fff"/></svg>
<div class="t" style="left:804px;top:817px;font-size:9.6px;color:#f4f6f8">钉钉</div>
<div class="a" style="left:860px;top:835px;width:78px;height:2px;background:#9aa3ad"></div>
<div class="a" style="left:866px;top:813px;width:18px;height:18px;border-radius:4px;background:#1e8ef5"></div>
<svg class="a" style="left:870px;top:816px" width="11" height="13" viewBox="0 0 11 13"><path d="M1 1l9 4-3 2 2 1-6 5 2-4-3-1z" fill="#fff"/></svg>
<div class="t" style="left:888px;top:817px;font-size:9.6px;color:#f4f6f8">马可柱分...</div>
<div class="a" style="left:943px;top:835px;width:79px;height:2px;background:#9aa3ad"></div>
<div class="a" style="left:951px;top:813px;width:18px;height:18px;border-radius:4px;background:#f4891f"></div>
<div class="a" style="left:955px;top:818px;width:10px;height:8px;border-radius:2px;background:#fff"></div>
<div class="t" style="left:973px;top:817px;font-size:9.6px;color:#f4f6f8">钉钉直播</div>
<div class="a" style="left:1028px;top:835px;width:79px;height:2px;background:#9aa3ad"></div>
<div class="a" style="left:1037px;top:813px;width:18px;height:18px;border-radius:4px;background:#f4891f"></div>
<div class="a" style="left:1041px;top:818px;width:10px;height:8px;border-radius:2px;background:#fff"></div>
<div class="t" style="left:1057px;top:817px;font-size:9.6px;color:#f4f6f8">互动面板</div>
<div class="a" style="left:1113px;top:835px;width:79px;height:2px;background:#9aa3ad"></div>
<svg class="a" style="left:1122px;top:813px" width="18" height="19" viewBox="0 0 18 19"><path d="M4 1h12l-4 17H1z" fill="#7ec6d8"/><path d="M6 4h7M5 7h7M4.5 10h7" stroke="#d8f0f4" stroke-width="1"/></svg>
<div class="t" style="left:1144px;top:817px;font-size:9.6px;color:#f4f6f8">*新建文本...</div>
<div class="a" style="left:1197px;top:835px;width:79px;height:2px;background:#9aa3ad"></div>
<div class="a" style="left:1206px;top:812px;width:20px;height:20px;border-radius:50%;background:conic-gradient(from -60deg,#ea4335 0 120deg,#fbbc05 120deg 240deg,#34a853 240deg 360deg)"></div>
<div class="a" style="left:1211px;top:817px;width:10px;height:10px;border-radius:50%;background:#4285f4;border:2px solid #fff"></div>
<div class="t" style="left:1229px;top:817px;font-size:9.6px;color:#f4f6f8">达人首页 ...</div>
<svg class="a" style="left:1291px;top:817px" width="12" height="8" viewBox="0 0 12 8"><path d="M1 7l5-5 5 5" fill="none" stroke="#e9edf1" stroke-width="1.3"/></svg>
<svg class="a" style="left:1311px;top:813px" width="10" height="18" viewBox="0 0 10 18"><rect x="2.5" y="1" width="5" height="10" rx="2.5" fill="#e9edf1"/><path d="M1 8a4 4 0 0 0 8 0M5 12v4M2.5 16.5h5" fill="none" stroke="#e9edf1" stroke-width="1.2"/></svg>
<svg class="a" style="left:1327px;top:814px" width="16" height="16" viewBox="0 0 16 16"><path d="M1.5 6h3l4-3.5v11L4.5 10h-3z" fill="none" stroke="#e9edf1" stroke-width="1.2"/><path d="M10.5 5.5q1.5 2.5 0 5M12.5 3.5q3 4.5 0 9" fill="none" stroke="#e9edf1" stroke-width="1.2"/></svg>
<div class="t" style="left:1345px;top:814px;font-size:13px;color:#e9edf1">英</div>
<div class="a" style="left:1367px;top:815px;width:14px;height:14px;background:#e9edf1"></div><div class="t" style="left:1368px;top:816px;font-size:12px;color:#1d2933;font-weight:bold">拼</div>
<div class="t" style="left:1404px;top:809px;font-size:11px;color:#fff">21:02</div>
<div class="t" style="left:1397px;top:823px;font-size:11px;color:#fff">2026/1/6</div>
<div class="a" style="left:1387px;top:795px;width:62px;height:48px;border:3px solid #f04a4a"></div>
<svg class="a" style="left:1452px;top:813px" width="20" height="20" viewBox="0 0 20 20"><path d="M2 2h13v10H7l-4 3v-3H2z" fill="#e9edf1"/><path d="M5 5h7M5 8h7" stroke="#1d2933" stroke-width="1.2"/><circle cx="14" cy="15" r="4.5" fill="#1d2933" stroke="#e9edf1" stroke-width="1"/><text x="14" y="17.5" font-size="7" text-anchor="middle" fill="#fff" font-family="Liberation Sans">1</text></svg>
<div class="a" style="left:0;top:805px;width:107px;height:32px;background:rgba(10,12,14,.92)"></div>
<div class="t" style="left:3px;top:808px;font-size:20px;color:#fff">答疑三剑客</div>
</body></html>
